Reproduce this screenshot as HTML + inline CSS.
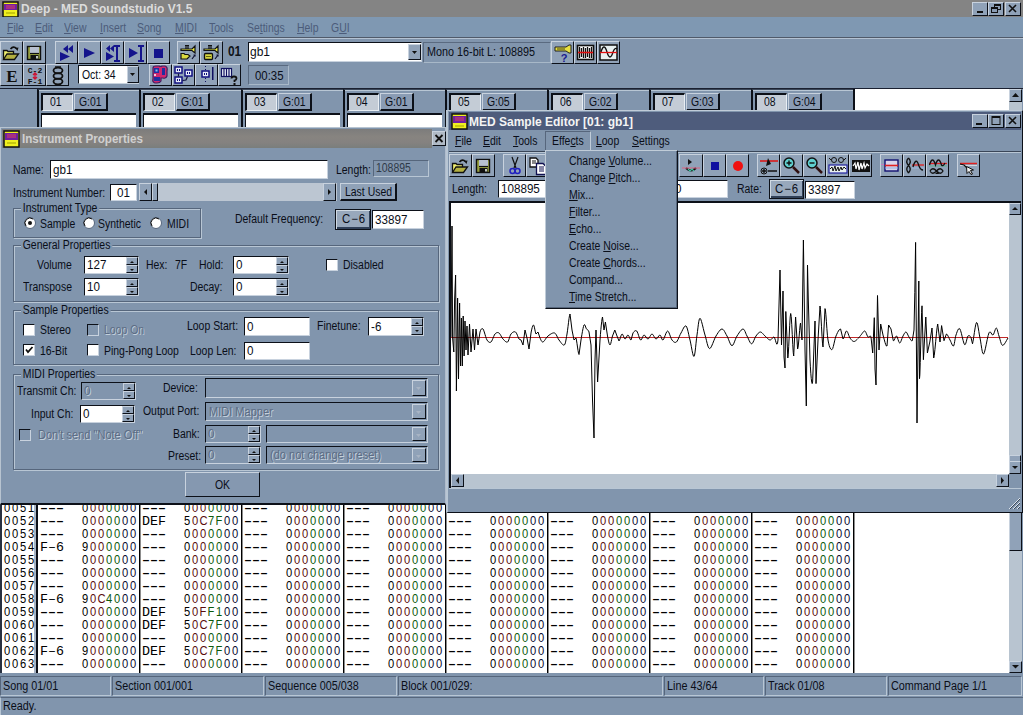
<!DOCTYPE html><html><head><meta charset="utf-8"><style>
html,body{margin:0;padding:0;}
body{width:1023px;height:715px;overflow:hidden;position:relative;background:#8195ad;font-family:"Liberation Sans",sans-serif;font-size:11px;color:#0a0e18;}
div{position:absolute;box-sizing:border-box;}
.t{white-space:nowrap;line-height:13px;font-size:12px;transform-origin:0 0;}
.h{font-family:"Liberation Sans",sans-serif;font-size:13px;line-height:13px;white-space:pre;}
.h i{font-style:normal;display:inline-block;width:8px;text-align:center;transform:scaleX(0.86);}
.k{color:#000}.r{color:#5a0c0c}.g{color:#0c5a0c}.b{color:#0a0a30}
.m{font-family:"Liberation Mono",monospace;font-size:13.33px;line-height:13px;white-space:pre;}
u{text-decoration:underline;text-underline-offset:1px;}
</style></head><body>

<div style="left:0px;top:0px;width:1023px;height:17px;background:#848484;"></div>
<div class="t" style="left:21px;top:3px;font-weight:bold;font-size:12px;color:#dcdcdc;">Deep - MED Soundstudio V1.5</div>
<svg style="position:absolute;left:2px;top:1px" width="18" height="17"><rect x="1" y="1" width="15" height="15" fill="#f0f020" stroke="#101010" stroke-width="1.5"/><rect x="2" y="3" width="13" height="6" fill="#7020a0"/><path d="M4 5 L13 5 M4 7 L13 7" stroke="#e04060"/><path d="M4 12 L13 12" stroke="#a0a000"/></svg>
<div style="left:972px;top:2px;width:16px;height:14px;background:#90a2b8;border-top:1px solid #c8d2de;border-left:1px solid #c8d2de;border-right:1px solid #0c1018;border-bottom:1px solid #0c1018;box-sizing:border-box;"><svg width="14" height="12" style="position:absolute;left:0;top:0"><rect x="4" y="8" width="6" height="2" fill="#101010"/></svg></div>
<div style="left:988px;top:2px;width:16px;height:14px;background:#90a2b8;border-top:1px solid #c8d2de;border-left:1px solid #c8d2de;border-right:1px solid #0c1018;border-bottom:1px solid #0c1018;box-sizing:border-box;"><svg width="14" height="12" style="position:absolute;left:0;top:0"><rect x="5.5" y="1.5" width="6" height="5" fill="none" stroke="#101010"/><rect x="5" y="1" width="7" height="2" fill="#101010"/><rect x="2.5" y="4.5" width="6" height="5" fill="#8a9cb4" stroke="#101010"/><rect x="2" y="4" width="7" height="2" fill="#101010"/></svg></div>
<div style="left:1005px;top:2px;width:16px;height:14px;background:#90a2b8;border-top:1px solid #c8d2de;border-left:1px solid #c8d2de;border-right:1px solid #0c1018;border-bottom:1px solid #0c1018;box-sizing:border-box;"><svg width="14" height="12" style="position:absolute;left:0;top:0"><path d="M3 2 L10 9 M10 2 L3 9" stroke="#101010" stroke-width="1.6"/></svg></div>
<div style="left:0px;top:17px;width:1023px;height:21px;background:#7f98b2;"></div>
<div class="t" style="left:7px;top:22px;transform:scaleX(0.87);color:#4c5c7a;font-size:12px;"><u>F</u>ile</div>
<div class="t" style="left:35px;top:22px;transform:scaleX(0.87);color:#4c5c7a;font-size:12px;"><u>E</u>dit</div>
<div class="t" style="left:64px;top:22px;transform:scaleX(0.87);color:#4c5c7a;font-size:12px;"><u>V</u>iew</div>
<div class="t" style="left:100px;top:22px;transform:scaleX(0.87);color:#4c5c7a;font-size:12px;"><u>I</u>nsert</div>
<div class="t" style="left:137px;top:22px;transform:scaleX(0.87);color:#4c5c7a;font-size:12px;"><u>S</u>ong</div>
<div class="t" style="left:175px;top:22px;transform:scaleX(0.87);color:#4c5c7a;font-size:12px;"><u>M</u>IDI</div>
<div class="t" style="left:209px;top:22px;transform:scaleX(0.87);color:#4c5c7a;font-size:12px;"><u>T</u>ools</div>
<div class="t" style="left:247px;top:22px;transform:scaleX(0.87);color:#4c5c7a;font-size:12px;">Se<u>t</u>tings</div>
<div class="t" style="left:297px;top:22px;transform:scaleX(0.87);color:#4c5c7a;font-size:12px;"><u>H</u>elp</div>
<div class="t" style="left:331px;top:22px;transform:scaleX(0.87);color:#4c5c7a;font-size:12px;">G<u>U</u>I</div>
<div style="left:0px;top:37px;width:1023px;height:1px;background:#505a6a;"></div>
<div style="left:0px;top:38px;width:1023px;height:1px;background:#b4c2d2;"></div>
<div style="left:0px;top:88px;width:1023px;height:1px;background:#1a2030;"></div>
<div style="left:0px;top:41px;width:23px;height:23px;background:#90a2b8;border-top:1px solid #c8d2de;border-left:1px solid #c8d2de;border-right:1px solid #0c1018;border-bottom:1px solid #0c1018;box-sizing:border-box;"><svg width="21" height="21" style="position:absolute;left:0;top:0" viewBox="0 0 21 21"><path d="M2.5 17.5 L2.5 8.5 L6 8.5 L7 9.5 L12.5 9.5 L12.5 12" fill="#f0f070" stroke="#101010" stroke-width="1.3"/><path d="M2.5 17.5 L6 12 L17.5 12 L13.5 17.5Z" fill="#b4b040" stroke="#101010" stroke-width="1.3"/><path d="M9.5 7 Q12.5 3.5 15.5 6.5" stroke="#101010" stroke-width="1.6" fill="none"/><path d="M14 6 L17.5 5.5 L16.5 9Z" fill="#101010"/></svg></div>
<div style="left:23px;top:41px;width:23px;height:23px;background:#90a2b8;border-top:1px solid #c8d2de;border-left:1px solid #c8d2de;border-right:1px solid #0c1018;border-bottom:1px solid #0c1018;box-sizing:border-box;"><svg width="21" height="21" style="position:absolute;left:0;top:0" viewBox="0 0 21 21"><rect x="3.5" y="4.5" width="13" height="13" fill="#98a040" stroke="#101010" stroke-width="1.4"/><rect x="6" y="5" width="9" height="6" fill="#b8c0d0"/><path d="M6 11.5 L15 11.5" stroke="#101010" stroke-width="1.2"/><rect x="6.5" y="13" width="8" height="4.5" fill="#101010"/><rect x="12" y="14" width="2" height="2.5" fill="#c0c8c0"/></svg></div>
<div style="left:55px;top:41px;width:23px;height:23px;background:#90a2b8;border-top:1px solid #c8d2de;border-left:1px solid #c8d2de;border-right:1px solid #0c1018;border-bottom:1px solid #0c1018;box-sizing:border-box;"><svg width="21" height="21" style="position:absolute;left:0;top:0" viewBox="0 0 21 21"><path d="M12 3 L12 11 L7 7Z M17 3 L17 11 L12 7Z" fill="#14148c"/><path d="M4 10 L4 19 L14 14.5Z" fill="#14148c"/></svg></div>
<div style="left:78px;top:41px;width:23px;height:23px;background:#90a2b8;border-top:1px solid #c8d2de;border-left:1px solid #c8d2de;border-right:1px solid #0c1018;border-bottom:1px solid #0c1018;box-sizing:border-box;"><svg width="21" height="21" style="position:absolute;left:0;top:0" viewBox="0 0 21 21"><path d="M5 6 L5 16 L16 11Z" fill="#14148c"/></svg></div>
<div style="left:101px;top:41px;width:23px;height:23px;background:#90a2b8;border-top:1px solid #c8d2de;border-left:1px solid #c8d2de;border-right:1px solid #0c1018;border-bottom:1px solid #0c1018;box-sizing:border-box;"><svg width="21" height="21" style="position:absolute;left:0;top:0" viewBox="0 0 21 21"><path d="M8 3 L8 10 L4 6.5Z M12 3 L12 10 L8 6.5Z" fill="#14148c"/><path d="M4 10 L4 19 L12 14.5Z" fill="#14148c"/><rect x="14" y="4" width="2" height="15" fill="#14148c"/><rect x="12" y="3" width="6" height="2" fill="#14148c"/><rect x="12" y="18" width="6" height="2" fill="#14148c"/></svg></div>
<div style="left:124px;top:41px;width:23px;height:23px;background:#90a2b8;border-top:1px solid #c8d2de;border-left:1px solid #c8d2de;border-right:1px solid #0c1018;border-bottom:1px solid #0c1018;box-sizing:border-box;"><svg width="21" height="21" style="position:absolute;left:0;top:0" viewBox="0 0 21 21"><path d="M4 6 L4 16 L13 11Z" fill="#14148c"/><rect x="15" y="4" width="2" height="15" fill="#14148c"/><rect x="13" y="3" width="6" height="2" fill="#14148c"/><rect x="13" y="18" width="6" height="2" fill="#14148c"/></svg></div>
<div style="left:147px;top:41px;width:23px;height:23px;background:#90a2b8;border-top:1px solid #c8d2de;border-left:1px solid #c8d2de;border-right:1px solid #0c1018;border-bottom:1px solid #0c1018;box-sizing:border-box;"><svg width="21" height="21" style="position:absolute;left:0;top:0" viewBox="0 0 21 21"><rect x="6" y="7" width="9" height="9" fill="#14148c"/></svg></div>
<div style="left:177px;top:41px;width:23px;height:23px;background:#90a2b8;border-top:1px solid #c8d2de;border-left:1px solid #c8d2de;border-right:1px solid #0c1018;border-bottom:1px solid #0c1018;box-sizing:border-box;"><svg width="21" height="21" style="position:absolute;left:0;top:0" viewBox="0 0 21 21"><path d="M3 7 L14 7 L17 4 L17 11 L14 8.5 L3 8.5Z" fill="#f0f040" stroke="#101010" stroke-width="1.2"/><path d="M7 3.5 L11 3.5 M8 4 L8 7 M10 4 L10 7" stroke="#101010" stroke-width="1.2"/><path d="M3 17 L3 11.5 L6 11.5 L7 12.5 L10 12.5 L12 14 L9 17Z" fill="#d8d840" stroke="#101010" stroke-width="1.2"/><path d="M14 17 L17 13 M15.5 13 L17 13 L17 14.5" stroke="#101030" stroke-width="1.2" fill="none"/></svg></div>
<div style="left:200px;top:41px;width:23px;height:23px;background:#90a2b8;border-top:1px solid #c8d2de;border-left:1px solid #c8d2de;border-right:1px solid #0c1018;border-bottom:1px solid #0c1018;box-sizing:border-box;"><svg width="21" height="21" style="position:absolute;left:0;top:0" viewBox="0 0 21 21"><path d="M3 7 L14 7 L17 4 L17 11 L14 8.5 L3 8.5Z" fill="#f0f040" stroke="#101010" stroke-width="1.2"/><path d="M7 3.5 L11 3.5 M8 4 L8 7 M10 4 L10 7" stroke="#101010" stroke-width="1.2"/><rect x="3.5" y="11.5" width="8" height="6" rx="1" fill="#d8d840" stroke="#101010" stroke-width="1.3"/><path d="M5 14.5 L10 14.5" stroke="#606010"/><path d="M14 17 L17 13 M15.5 13 L17 13 L17 14.5" stroke="#101030" stroke-width="1.2" fill="none"/></svg></div>
<div class="t" style="left:228px;top:45px;transform:scaleX(0.85);font-weight:bold;font-size:14px;color:#101418;">01</div>
<div style="left:248px;top:42px;width:174px;height:20px;background:#fff;border-top:1px solid #0c1018;border-left:1px solid #0c1018;border-right:1px solid #c8d2de;border-bottom:1px solid #c8d2de;box-sizing:border-box;"></div>
<div class="t" style="left:250px;top:46px;font-size:12px;">gb1</div>
<div style="left:408px;top:44px;width:13px;height:16px;background:#90a2b8;border-top:1px solid #c8d2de;border-left:1px solid #c8d2de;border-right:1px solid #0c1018;border-bottom:1px solid #0c1018;box-sizing:border-box;"><svg width="11" height="14" style="position:absolute;left:0;top:0"><path d="M3 6 L8 6 L5.5 9Z" fill="#101010"/></svg></div>
<div style="left:423px;top:42px;width:128px;height:21px;border-top:1px solid #5a6a80;border-left:1px solid #5a6a80;border-right:1px solid #a8b8c8;border-bottom:1px solid #a8b8c8;background:#8195ad;"></div>
<div class="t" style="left:427px;top:46px;transform:scaleX(0.9);font-size:12px;">Mono 16-bit L: 108895</div>
<div style="left:551px;top:41px;width:23px;height:23px;background:#90a2b8;border-top:1px solid #c8d2de;border-left:1px solid #c8d2de;border-right:1px solid #0c1018;border-bottom:1px solid #0c1018;box-sizing:border-box;"><svg width="21" height="21" style="position:absolute;left:0;top:0" viewBox="0 0 21 21"><path d="M3 5 L14 5 L17 3 L19 3 L19 11 L17 11 L14 9 L3 9Z" fill="#e8e040" stroke="#202020"/><path d="M5 7 L13 7" stroke="#404010"/><text x="12" y="20" font-family="Liberation Sans" font-weight="bold" font-size="11" text-anchor="middle" fill="#1a1a90">?</text></svg></div>
<div style="left:574px;top:41px;width:23px;height:23px;background:#90a2b8;border-top:1px solid #c8d2de;border-left:1px solid #c8d2de;border-right:1px solid #0c1018;border-bottom:1px solid #0c1018;box-sizing:border-box;"><svg width="21" height="21" style="position:absolute;left:0;top:0" viewBox="0 0 21 21"><rect x="2.5" y="3.5" width="16" height="14" fill="#fff" stroke="#101010" stroke-width="1.6"/><path d="M4.5 5 L4.5 16 M6.5 6 L6.5 15 M8.5 5 L8.5 16 M10.5 6 L10.5 16 M12.5 5 L12.5 15 M14.5 6 L14.5 16 M16.5 5 L16.5 16" stroke="#101010" stroke-width="1.3"/><path d="M3 10.5 L18 10.5" stroke="#e01010" stroke-width="1.6"/></svg></div>
<div style="left:597px;top:41px;width:23px;height:23px;background:#90a2b8;border-top:1px solid #c8d2de;border-left:1px solid #c8d2de;border-right:1px solid #0c1018;border-bottom:1px solid #0c1018;box-sizing:border-box;"><svg width="21" height="21" style="position:absolute;left:0;top:0" viewBox="0 0 21 21"><rect x="2" y="3" width="17" height="15" fill="#e8f0f0" stroke="#101010" stroke-width="1.5"/><path d="M3 10 Q6 0 9 10 Q12 20 15 10 Q17 5 19 7" stroke="#101010" stroke-width="1.3" fill="none"/><path d="M2 10.5 L19 10.5" stroke="#e01010" stroke-width="1.3"/></svg></div>
<div style="left:0px;top:64px;width:23px;height:22px;background:#90a2b8;border-top:1px solid #c8d2de;border-left:1px solid #c8d2de;border-right:1px solid #0c1018;border-bottom:1px solid #0c1018;box-sizing:border-box;"><svg width="21" height="20" style="position:absolute;left:0;top:0" viewBox="0 0 21 20"><text x="11" y="17" font-family="Liberation Serif" font-weight="bold" font-size="17" text-anchor="middle" fill="#101010">E</text></svg></div>
<div style="left:23px;top:64px;width:23px;height:22px;background:#90a2b8;border-top:1px solid #c8d2de;border-left:1px solid #c8d2de;border-right:1px solid #0c1018;border-bottom:1px solid #0c1018;box-sizing:border-box;"><svg width="21" height="20" style="position:absolute;left:0;top:0" viewBox="0 0 21 20"><text x="11" y="8" font-family="Liberation Mono" font-weight="bold" font-size="8" text-anchor="middle" fill="#101010">C-2</text><text x="11" y="19" font-family="Liberation Mono" font-weight="bold" font-size="8" text-anchor="middle" fill="#101010">F-1</text><path d="M11 8 L11 14 M9 10 L11 8 L13 10 M9 12 L11 14 L13 12" stroke="#d01030" stroke-width="1.3" fill="none"/></svg></div>
<div style="left:46px;top:64px;width:23px;height:22px;background:#90a2b8;border-top:1px solid #c8d2de;border-left:1px solid #c8d2de;border-right:1px solid #0c1018;border-bottom:1px solid #0c1018;box-sizing:border-box;"><svg width="21" height="20" style="position:absolute;left:0;top:0" viewBox="0 0 21 20"><ellipse cx="11" cy="5.5" rx="4.5" ry="2.8" fill="none" stroke="#101010" stroke-width="1.8"/><ellipse cx="11" cy="11" rx="4.5" ry="2.8" fill="none" stroke="#101010" stroke-width="1.8"/><ellipse cx="11" cy="16.5" rx="4.5" ry="2.8" fill="none" stroke="#101010" stroke-width="1.8"/><path d="M8 2 L14 2 M8 20 L14 20" stroke="#101010" stroke-width="1.5"/></svg></div>
<div style="left:78px;top:65px;width:61px;height:19px;background:#fff;border-top:1px solid #0c1018;border-left:1px solid #0c1018;border-right:1px solid #c8d2de;border-bottom:1px solid #c8d2de;box-sizing:border-box;"></div>
<div class="t" style="left:82px;top:69px;transform:scaleX(0.87);font-size:12px;">Oct: 34</div>
<div style="left:127px;top:66px;width:12px;height:17px;background:#90a2b8;border-top:1px solid #c8d2de;border-left:1px solid #c8d2de;border-right:1px solid #0c1018;border-bottom:1px solid #0c1018;box-sizing:border-box;"><svg width="10" height="15" style="position:absolute;left:0;top:0"><path d="M2 6 L7 6 L4.5 9Z" fill="#101010"/></svg></div>
<div style="left:149px;top:64px;width:23px;height:22px;background:#90a2b8;border-top:1px solid #c8d2de;border-left:1px solid #c8d2de;border-right:1px solid #0c1018;border-bottom:1px solid #0c1018;box-sizing:border-box;"><svg width="21" height="20" style="position:absolute;left:0;top:0" viewBox="0 0 21 20"><path d="M3 3 Q3 1 6 1 L9 1 Q11 2 12 1 L15 1 Q18 2 17 6 L17 11 Q16 14 13 13 L11 13 L11 16 Q10 18 7 18 L5 18 Q2 17 3 14 Z" fill="#d02870" stroke="#402060" stroke-width="1.2"/><rect x="4" y="3" width="5" height="5" fill="#2030a0"/><rect x="5.5" y="4.5" width="2" height="2" fill="#80c0f0"/><rect x="4" y="12" width="6" height="4" fill="#2030a0"/><rect x="12" y="3" width="3" height="7" fill="#2030a0"/><circle cx="5" cy="10" r="1" fill="#fff"/></svg></div>
<div style="left:172px;top:64px;width:23px;height:22px;background:#90a2b8;border-top:1px solid #c8d2de;border-left:1px solid #c8d2de;border-right:1px solid #0c1018;border-bottom:1px solid #0c1018;box-sizing:border-box;"><svg width="21" height="20" style="position:absolute;left:0;top:0" viewBox="0 0 21 20"><rect x="2" y="2" width="7" height="6" fill="#e8ecf8" stroke="#101080" stroke-width="1.5"/><path d="M4.5 4 L4.5 6 M6.5 4 L6.5 6" stroke="#101080"/><rect x="12" y="5" width="7" height="6" fill="#e8ecf8" stroke="#101080" stroke-width="1.5"/><path d="M14.5 7 L14.5 9 M16.5 7 L16.5 9" stroke="#101080"/><rect x="2" y="12" width="7" height="6" fill="#e8ecf8" stroke="#101080" stroke-width="1.5"/><path d="M4.5 14 L4.5 16 M6.5 14 L6.5 16" stroke="#101080"/><path d="M5.5 8.5 L5.5 11.5 M9.5 15.5 L13 15 L14.5 11.5" stroke="#101040" stroke-width="1.2" fill="none"/></svg></div>
<div style="left:195px;top:64px;width:23px;height:22px;background:#90a2b8;border-top:1px solid #c8d2de;border-left:1px solid #c8d2de;border-right:1px solid #0c1018;border-bottom:1px solid #0c1018;box-sizing:border-box;"><svg width="21" height="20" style="position:absolute;left:0;top:0" viewBox="0 0 21 20"><path d="M9.5 1 L9.5 17" stroke="#101060" stroke-dasharray="1 2"/><rect x="6" y="6" width="7" height="6" fill="#e8ecf8" stroke="#101080" stroke-width="1.5"/><path d="M8.5 8 L8.5 10 M10.5 8 L10.5 10" stroke="#101080"/><rect x="16" y="2" width="1.5" height="13" fill="#101060"/></svg></div>
<div style="left:218px;top:64px;width:23px;height:22px;background:#90a2b8;border-top:1px solid #c8d2de;border-left:1px solid #c8d2de;border-right:1px solid #0c1018;border-bottom:1px solid #0c1018;box-sizing:border-box;"><svg width="21" height="20" style="position:absolute;left:0;top:0" viewBox="0 0 21 20"><rect x="2.5" y="3.5" width="10" height="8" fill="#f0f4fc" stroke="#101060" stroke-width="1.2"/><path d="M5 3.5 L5 11.5 M7.5 3.5 L7.5 11.5 M10 3.5 L10 11.5" stroke="#101060" stroke-width="1.2"/><path d="M12.5 13.5 Q12.5 11.5 15 11.5 Q17.5 11.5 17.5 13.5 Q17.5 15 15.5 15.5 L15.5 17" stroke="#101010" stroke-width="1.8" fill="none"/><rect x="14.5" y="18" width="2" height="2" fill="#101010"/></svg></div>
<div style="left:248px;top:65px;width:41px;height:20px;border-top:1px solid #5a6a80;border-left:1px solid #5a6a80;border-right:1px solid #a8b8c8;border-bottom:1px solid #a8b8c8;background:#8195ad;"></div>
<div class="t" style="left:255px;top:70px;transform:scaleX(0.95);font-size:12px;">00:35</div>
<div style="left:37px;top:89px;width:102px;height:40px;border-left:2px solid #0c1018;border-top:1px solid #3a4658;background:#8195ad;"></div>
<div style="left:39px;top:90px;width:100px;height:1px;background:#b8c6d4;"></div>
<div style="left:41px;top:93px;width:32px;height:18px;background:#c4ccd6;border-top:2px solid #0c1018;border-left:2px solid #0c1018;border-right:1px solid #e8eef4;border-bottom:1px solid #e8eef4;"></div>
<div class="t" style="left:50px;top:96px;transform:scaleX(0.87);font-size:12px;">01</div>
<div style="left:74px;top:93px;width:34px;height:18px;background:#8a9cb4;border-top:1px solid #c8d2de;border-left:1px solid #c8d2de;border-right:1px solid #0c1018;border-bottom:1px solid #0c1018;box-sizing:border-box;border-right:2px solid #0c1018;border-bottom:2px solid #0c1018;"></div>
<div class="t" style="left:79px;top:96px;transform:scaleX(0.87);font-size:12px;">G:01</div>
<div style="left:41px;top:113px;width:95px;height:16px;background:#fff;border-top:2px solid #0c1018;border-left:1px solid #0c1018;"></div>
<div style="left:139px;top:89px;width:102px;height:40px;border-left:2px solid #0c1018;border-top:1px solid #3a4658;background:#8195ad;"></div>
<div style="left:141px;top:90px;width:100px;height:1px;background:#b8c6d4;"></div>
<div style="left:143px;top:93px;width:32px;height:18px;background:#c4ccd6;border-top:2px solid #0c1018;border-left:2px solid #0c1018;border-right:1px solid #e8eef4;border-bottom:1px solid #e8eef4;"></div>
<div class="t" style="left:152px;top:96px;transform:scaleX(0.87);font-size:12px;">02</div>
<div style="left:176px;top:93px;width:34px;height:18px;background:#8a9cb4;border-top:1px solid #c8d2de;border-left:1px solid #c8d2de;border-right:1px solid #0c1018;border-bottom:1px solid #0c1018;box-sizing:border-box;border-right:2px solid #0c1018;border-bottom:2px solid #0c1018;"></div>
<div class="t" style="left:181px;top:96px;transform:scaleX(0.87);font-size:12px;">G:01</div>
<div style="left:143px;top:113px;width:95px;height:16px;background:#fff;border-top:2px solid #0c1018;border-left:1px solid #0c1018;"></div>
<div style="left:241px;top:89px;width:102px;height:40px;border-left:2px solid #0c1018;border-top:1px solid #3a4658;background:#8195ad;"></div>
<div style="left:243px;top:90px;width:100px;height:1px;background:#b8c6d4;"></div>
<div style="left:245px;top:93px;width:32px;height:18px;background:#c4ccd6;border-top:2px solid #0c1018;border-left:2px solid #0c1018;border-right:1px solid #e8eef4;border-bottom:1px solid #e8eef4;"></div>
<div class="t" style="left:254px;top:96px;transform:scaleX(0.87);font-size:12px;">03</div>
<div style="left:278px;top:93px;width:34px;height:18px;background:#8a9cb4;border-top:1px solid #c8d2de;border-left:1px solid #c8d2de;border-right:1px solid #0c1018;border-bottom:1px solid #0c1018;box-sizing:border-box;border-right:2px solid #0c1018;border-bottom:2px solid #0c1018;"></div>
<div class="t" style="left:283px;top:96px;transform:scaleX(0.87);font-size:12px;">G:01</div>
<div style="left:245px;top:113px;width:95px;height:16px;background:#fff;border-top:2px solid #0c1018;border-left:1px solid #0c1018;"></div>
<div style="left:343px;top:89px;width:102px;height:40px;border-left:2px solid #0c1018;border-top:1px solid #3a4658;background:#8195ad;"></div>
<div style="left:345px;top:90px;width:100px;height:1px;background:#b8c6d4;"></div>
<div style="left:347px;top:93px;width:32px;height:18px;background:#c4ccd6;border-top:2px solid #0c1018;border-left:2px solid #0c1018;border-right:1px solid #e8eef4;border-bottom:1px solid #e8eef4;"></div>
<div class="t" style="left:356px;top:96px;transform:scaleX(0.87);font-size:12px;">04</div>
<div style="left:380px;top:93px;width:34px;height:18px;background:#8a9cb4;border-top:1px solid #c8d2de;border-left:1px solid #c8d2de;border-right:1px solid #0c1018;border-bottom:1px solid #0c1018;box-sizing:border-box;border-right:2px solid #0c1018;border-bottom:2px solid #0c1018;"></div>
<div class="t" style="left:385px;top:96px;transform:scaleX(0.87);font-size:12px;">G:01</div>
<div style="left:347px;top:113px;width:95px;height:16px;background:#fff;border-top:2px solid #0c1018;border-left:1px solid #0c1018;"></div>
<div style="left:445px;top:89px;width:102px;height:40px;border-left:2px solid #0c1018;border-top:1px solid #3a4658;background:#8195ad;"></div>
<div style="left:447px;top:90px;width:100px;height:1px;background:#b8c6d4;"></div>
<div style="left:449px;top:93px;width:32px;height:18px;background:#c4ccd6;border-top:2px solid #0c1018;border-left:2px solid #0c1018;border-right:1px solid #e8eef4;border-bottom:1px solid #e8eef4;"></div>
<div class="t" style="left:458px;top:96px;transform:scaleX(0.87);font-size:12px;">05</div>
<div style="left:482px;top:93px;width:34px;height:18px;background:#8a9cb4;border-top:1px solid #c8d2de;border-left:1px solid #c8d2de;border-right:1px solid #0c1018;border-bottom:1px solid #0c1018;box-sizing:border-box;border-right:2px solid #0c1018;border-bottom:2px solid #0c1018;"></div>
<div class="t" style="left:487px;top:96px;transform:scaleX(0.87);font-size:12px;">G:05</div>
<div style="left:449px;top:113px;width:95px;height:16px;background:#fff;border-top:2px solid #0c1018;border-left:1px solid #0c1018;"></div>
<div style="left:547px;top:89px;width:102px;height:40px;border-left:2px solid #0c1018;border-top:1px solid #3a4658;background:#8195ad;"></div>
<div style="left:549px;top:90px;width:100px;height:1px;background:#b8c6d4;"></div>
<div style="left:551px;top:93px;width:32px;height:18px;background:#c4ccd6;border-top:2px solid #0c1018;border-left:2px solid #0c1018;border-right:1px solid #e8eef4;border-bottom:1px solid #e8eef4;"></div>
<div class="t" style="left:560px;top:96px;transform:scaleX(0.87);font-size:12px;">06</div>
<div style="left:584px;top:93px;width:34px;height:18px;background:#8a9cb4;border-top:1px solid #c8d2de;border-left:1px solid #c8d2de;border-right:1px solid #0c1018;border-bottom:1px solid #0c1018;box-sizing:border-box;border-right:2px solid #0c1018;border-bottom:2px solid #0c1018;"></div>
<div class="t" style="left:589px;top:96px;transform:scaleX(0.87);font-size:12px;">G:02</div>
<div style="left:551px;top:113px;width:95px;height:16px;background:#fff;border-top:2px solid #0c1018;border-left:1px solid #0c1018;"></div>
<div style="left:649px;top:89px;width:102px;height:40px;border-left:2px solid #0c1018;border-top:1px solid #3a4658;background:#8195ad;"></div>
<div style="left:651px;top:90px;width:100px;height:1px;background:#b8c6d4;"></div>
<div style="left:653px;top:93px;width:32px;height:18px;background:#c4ccd6;border-top:2px solid #0c1018;border-left:2px solid #0c1018;border-right:1px solid #e8eef4;border-bottom:1px solid #e8eef4;"></div>
<div class="t" style="left:662px;top:96px;transform:scaleX(0.87);font-size:12px;">07</div>
<div style="left:686px;top:93px;width:34px;height:18px;background:#8a9cb4;border-top:1px solid #c8d2de;border-left:1px solid #c8d2de;border-right:1px solid #0c1018;border-bottom:1px solid #0c1018;box-sizing:border-box;border-right:2px solid #0c1018;border-bottom:2px solid #0c1018;"></div>
<div class="t" style="left:691px;top:96px;transform:scaleX(0.87);font-size:12px;">G:03</div>
<div style="left:653px;top:113px;width:95px;height:16px;background:#fff;border-top:2px solid #0c1018;border-left:1px solid #0c1018;"></div>
<div style="left:751px;top:89px;width:102px;height:40px;border-left:2px solid #0c1018;border-top:1px solid #3a4658;background:#8195ad;"></div>
<div style="left:753px;top:90px;width:100px;height:1px;background:#b8c6d4;"></div>
<div style="left:755px;top:93px;width:32px;height:18px;background:#c4ccd6;border-top:2px solid #0c1018;border-left:2px solid #0c1018;border-right:1px solid #e8eef4;border-bottom:1px solid #e8eef4;"></div>
<div class="t" style="left:764px;top:96px;transform:scaleX(0.87);font-size:12px;">08</div>
<div style="left:788px;top:93px;width:34px;height:18px;background:#8a9cb4;border-top:1px solid #c8d2de;border-left:1px solid #c8d2de;border-right:1px solid #0c1018;border-bottom:1px solid #0c1018;box-sizing:border-box;border-right:2px solid #0c1018;border-bottom:2px solid #0c1018;"></div>
<div class="t" style="left:793px;top:96px;transform:scaleX(0.87);font-size:12px;">G:04</div>
<div style="left:755px;top:113px;width:95px;height:16px;background:#fff;border-top:2px solid #0c1018;border-left:1px solid #0c1018;"></div>
<div style="left:853px;top:89px;width:156px;height:22px;background:#fff;border-left:2px solid #0c1018;"></div>
<div style="left:1009px;top:89px;width:13px;height:13px;background:#90a2b8;border-top:1px solid #c8d2de;border-left:1px solid #c8d2de;border-right:1px solid #0c1018;border-bottom:1px solid #0c1018;box-sizing:border-box;"><svg width="11" height="11" style="position:absolute;left:0;top:0"><path d="M2 7 L9 7 L5.5 3Z" fill="#101010"/></svg></div>
<div style="left:1009px;top:102px;width:13px;height:26px;background:#b8c4d0;"></div>
<div style="left:0px;top:503px;width:1009px;height:170px;background:#fff;overflow:hidden;"></div>
<div style="left:34px;top:502px;width:2px;height:171px;background:#a8b4c4;"></div><div style="left:36px;top:502px;width:2px;height:171px;background:#0c1018;"></div><div style="left:139px;top:502px;width:1px;height:171px;background:#000;box-shadow:1px 0 0 rgba(0,0,0,0.45);"></div><div style="left:241px;top:502px;width:1px;height:171px;background:#000;box-shadow:1px 0 0 rgba(0,0,0,0.45);"></div><div style="left:343px;top:502px;width:1px;height:171px;background:#000;box-shadow:1px 0 0 rgba(0,0,0,0.45);"></div><div style="left:445px;top:502px;width:1px;height:171px;background:#000;box-shadow:1px 0 0 rgba(0,0,0,0.45);"></div><div style="left:547px;top:502px;width:1px;height:171px;background:#000;box-shadow:1px 0 0 rgba(0,0,0,0.45);"></div><div style="left:649px;top:502px;width:1px;height:171px;background:#000;box-shadow:1px 0 0 rgba(0,0,0,0.45);"></div><div style="left:751px;top:502px;width:1px;height:171px;background:#000;box-shadow:1px 0 0 rgba(0,0,0,0.45);"></div><div style="left:853px;top:502px;width:1px;height:171px;background:#000;box-shadow:1px 0 0 rgba(0,0,0,0.45);"></div><div class="h" style="left:3px;top:501px"><i class="k">0</i><i class="k">0</i><i class="k">5</i><i class="k">1</i></div><div class="m" style="left:40px;top:502px;color:#000;font-weight:bold">&#8211;&#8211;&#8211;</div><div class="h" style="left:81px;top:501px"><i class="k">0</i><i class="r">0</i><i class="r">0</i><i class="g">0</i><i class="g">0</i><i class="b">0</i><i class="b">0</i></div><div class="m" style="left:142px;top:502px;color:#000;font-weight:bold">&#8211;&#8211;&#8211;</div><div class="h" style="left:183px;top:501px"><i class="k">0</i><i class="r">0</i><i class="r">0</i><i class="g">0</i><i class="g">0</i><i class="b">0</i><i class="b">0</i></div><div class="m" style="left:244px;top:502px;color:#000;font-weight:bold">&#8211;&#8211;&#8211;</div><div class="h" style="left:285px;top:501px"><i class="k">0</i><i class="r">0</i><i class="r">0</i><i class="g">0</i><i class="g">0</i><i class="b">0</i><i class="b">0</i></div><div class="m" style="left:346px;top:502px;color:#000;font-weight:bold">&#8211;&#8211;&#8211;</div><div class="h" style="left:387px;top:501px"><i class="k">0</i><i class="r">0</i><i class="r">0</i><i class="g">0</i><i class="g">0</i><i class="b">0</i><i class="b">0</i></div><div class="m" style="left:448px;top:502px;color:#000;font-weight:bold">&#8211;&#8211;&#8211;</div><div class="h" style="left:489px;top:501px"><i class="k">0</i><i class="r">0</i><i class="r">0</i><i class="g">0</i><i class="g">0</i><i class="b">0</i><i class="b">0</i></div><div class="m" style="left:550px;top:502px;color:#000;font-weight:bold">&#8211;&#8211;&#8211;</div><div class="h" style="left:591px;top:501px"><i class="k">0</i><i class="r">0</i><i class="r">0</i><i class="g">0</i><i class="g">0</i><i class="b">0</i><i class="b">0</i></div><div class="m" style="left:652px;top:502px;color:#000;font-weight:bold">&#8211;&#8211;&#8211;</div><div class="h" style="left:693px;top:501px"><i class="k">0</i><i class="r">0</i><i class="r">0</i><i class="g">0</i><i class="g">0</i><i class="b">0</i><i class="b">0</i></div><div class="m" style="left:754px;top:502px;color:#000;font-weight:bold">&#8211;&#8211;&#8211;</div><div class="h" style="left:795px;top:501px"><i class="k">0</i><i class="r">0</i><i class="r">0</i><i class="g">0</i><i class="g">0</i><i class="b">0</i><i class="b">0</i></div><div class="h" style="left:3px;top:514px"><i class="k">0</i><i class="k">0</i><i class="k">5</i><i class="k">2</i></div><div class="m" style="left:40px;top:515px;color:#000;font-weight:bold">&#8211;&#8211;&#8211;</div><div class="h" style="left:81px;top:514px"><i class="k">0</i><i class="r">0</i><i class="r">0</i><i class="g">0</i><i class="g">0</i><i class="b">0</i><i class="b">0</i></div><div class="m" style="left:142px;top:515px;color:#000;">DEF</div><div class="h" style="left:183px;top:514px"><i class="k">5</i><i class="r">0</i><i class="r">C</i><i class="g">7</i><i class="g">F</i><i class="b">0</i><i class="b">0</i></div><div class="m" style="left:244px;top:515px;color:#000;font-weight:bold">&#8211;&#8211;&#8211;</div><div class="h" style="left:285px;top:514px"><i class="k">0</i><i class="r">0</i><i class="r">0</i><i class="g">0</i><i class="g">0</i><i class="b">0</i><i class="b">0</i></div><div class="m" style="left:346px;top:515px;color:#000;font-weight:bold">&#8211;&#8211;&#8211;</div><div class="h" style="left:387px;top:514px"><i class="k">0</i><i class="r">0</i><i class="r">0</i><i class="g">0</i><i class="g">0</i><i class="b">0</i><i class="b">0</i></div><div class="m" style="left:448px;top:515px;color:#000;font-weight:bold">&#8211;&#8211;&#8211;</div><div class="h" style="left:489px;top:514px"><i class="k">0</i><i class="r">0</i><i class="r">0</i><i class="g">0</i><i class="g">0</i><i class="b">0</i><i class="b">0</i></div><div class="m" style="left:550px;top:515px;color:#000;font-weight:bold">&#8211;&#8211;&#8211;</div><div class="h" style="left:591px;top:514px"><i class="k">0</i><i class="r">0</i><i class="r">0</i><i class="g">0</i><i class="g">0</i><i class="b">0</i><i class="b">0</i></div><div class="m" style="left:652px;top:515px;color:#000;font-weight:bold">&#8211;&#8211;&#8211;</div><div class="h" style="left:693px;top:514px"><i class="k">0</i><i class="r">0</i><i class="r">0</i><i class="g">0</i><i class="g">0</i><i class="b">0</i><i class="b">0</i></div><div class="m" style="left:754px;top:515px;color:#000;font-weight:bold">&#8211;&#8211;&#8211;</div><div class="h" style="left:795px;top:514px"><i class="k">0</i><i class="r">0</i><i class="r">0</i><i class="g">0</i><i class="g">0</i><i class="b">0</i><i class="b">0</i></div><div class="h" style="left:3px;top:527px"><i class="k">0</i><i class="k">0</i><i class="k">5</i><i class="k">3</i></div><div class="m" style="left:40px;top:528px;color:#000;font-weight:bold">&#8211;&#8211;&#8211;</div><div class="h" style="left:81px;top:527px"><i class="k">0</i><i class="r">0</i><i class="r">0</i><i class="g">0</i><i class="g">0</i><i class="b">0</i><i class="b">0</i></div><div class="m" style="left:142px;top:528px;color:#000;font-weight:bold">&#8211;&#8211;&#8211;</div><div class="h" style="left:183px;top:527px"><i class="k">0</i><i class="r">0</i><i class="r">0</i><i class="g">0</i><i class="g">0</i><i class="b">0</i><i class="b">0</i></div><div class="m" style="left:244px;top:528px;color:#000;font-weight:bold">&#8211;&#8211;&#8211;</div><div class="h" style="left:285px;top:527px"><i class="k">0</i><i class="r">0</i><i class="r">0</i><i class="g">0</i><i class="g">0</i><i class="b">0</i><i class="b">0</i></div><div class="m" style="left:346px;top:528px;color:#000;font-weight:bold">&#8211;&#8211;&#8211;</div><div class="h" style="left:387px;top:527px"><i class="k">0</i><i class="r">0</i><i class="r">0</i><i class="g">0</i><i class="g">0</i><i class="b">0</i><i class="b">0</i></div><div class="m" style="left:448px;top:528px;color:#000;font-weight:bold">&#8211;&#8211;&#8211;</div><div class="h" style="left:489px;top:527px"><i class="k">0</i><i class="r">0</i><i class="r">0</i><i class="g">0</i><i class="g">0</i><i class="b">0</i><i class="b">0</i></div><div class="m" style="left:550px;top:528px;color:#000;font-weight:bold">&#8211;&#8211;&#8211;</div><div class="h" style="left:591px;top:527px"><i class="k">0</i><i class="r">0</i><i class="r">0</i><i class="g">0</i><i class="g">0</i><i class="b">0</i><i class="b">0</i></div><div class="m" style="left:652px;top:528px;color:#000;font-weight:bold">&#8211;&#8211;&#8211;</div><div class="h" style="left:693px;top:527px"><i class="k">0</i><i class="r">0</i><i class="r">0</i><i class="g">0</i><i class="g">0</i><i class="b">0</i><i class="b">0</i></div><div class="m" style="left:754px;top:528px;color:#000;font-weight:bold">&#8211;&#8211;&#8211;</div><div class="h" style="left:795px;top:527px"><i class="k">0</i><i class="r">0</i><i class="r">0</i><i class="g">0</i><i class="g">0</i><i class="b">0</i><i class="b">0</i></div><div class="h" style="left:3px;top:540px"><i class="k">0</i><i class="k">0</i><i class="k">5</i><i class="k">4</i></div><div class="m" style="left:40px;top:541px;color:#000;">F&#8211;6</div><div class="h" style="left:81px;top:540px"><i class="k">9</i><i class="r">0</i><i class="r">0</i><i class="g">0</i><i class="g">0</i><i class="b">0</i><i class="b">0</i></div><div class="m" style="left:142px;top:541px;color:#000;font-weight:bold">&#8211;&#8211;&#8211;</div><div class="h" style="left:183px;top:540px"><i class="k">0</i><i class="r">0</i><i class="r">0</i><i class="g">0</i><i class="g">0</i><i class="b">0</i><i class="b">0</i></div><div class="m" style="left:244px;top:541px;color:#000;font-weight:bold">&#8211;&#8211;&#8211;</div><div class="h" style="left:285px;top:540px"><i class="k">0</i><i class="r">0</i><i class="r">0</i><i class="g">0</i><i class="g">0</i><i class="b">0</i><i class="b">0</i></div><div class="m" style="left:346px;top:541px;color:#000;font-weight:bold">&#8211;&#8211;&#8211;</div><div class="h" style="left:387px;top:540px"><i class="k">0</i><i class="r">0</i><i class="r">0</i><i class="g">0</i><i class="g">0</i><i class="b">0</i><i class="b">0</i></div><div class="m" style="left:448px;top:541px;color:#000;font-weight:bold">&#8211;&#8211;&#8211;</div><div class="h" style="left:489px;top:540px"><i class="k">0</i><i class="r">0</i><i class="r">0</i><i class="g">0</i><i class="g">0</i><i class="b">0</i><i class="b">0</i></div><div class="m" style="left:550px;top:541px;color:#000;font-weight:bold">&#8211;&#8211;&#8211;</div><div class="h" style="left:591px;top:540px"><i class="k">0</i><i class="r">0</i><i class="r">0</i><i class="g">0</i><i class="g">0</i><i class="b">0</i><i class="b">0</i></div><div class="m" style="left:652px;top:541px;color:#000;font-weight:bold">&#8211;&#8211;&#8211;</div><div class="h" style="left:693px;top:540px"><i class="k">0</i><i class="r">0</i><i class="r">0</i><i class="g">0</i><i class="g">0</i><i class="b">0</i><i class="b">0</i></div><div class="m" style="left:754px;top:541px;color:#000;font-weight:bold">&#8211;&#8211;&#8211;</div><div class="h" style="left:795px;top:540px"><i class="k">0</i><i class="r">0</i><i class="r">0</i><i class="g">0</i><i class="g">0</i><i class="b">0</i><i class="b">0</i></div><div class="h" style="left:3px;top:553px"><i class="k">0</i><i class="k">0</i><i class="k">5</i><i class="k">5</i></div><div class="m" style="left:40px;top:554px;color:#000;font-weight:bold">&#8211;&#8211;&#8211;</div><div class="h" style="left:81px;top:553px"><i class="k">0</i><i class="r">0</i><i class="r">0</i><i class="g">0</i><i class="g">0</i><i class="b">0</i><i class="b">0</i></div><div class="m" style="left:142px;top:554px;color:#000;font-weight:bold">&#8211;&#8211;&#8211;</div><div class="h" style="left:183px;top:553px"><i class="k">0</i><i class="r">0</i><i class="r">0</i><i class="g">0</i><i class="g">0</i><i class="b">0</i><i class="b">0</i></div><div class="m" style="left:244px;top:554px;color:#000;font-weight:bold">&#8211;&#8211;&#8211;</div><div class="h" style="left:285px;top:553px"><i class="k">0</i><i class="r">0</i><i class="r">0</i><i class="g">0</i><i class="g">0</i><i class="b">0</i><i class="b">0</i></div><div class="m" style="left:346px;top:554px;color:#000;font-weight:bold">&#8211;&#8211;&#8211;</div><div class="h" style="left:387px;top:553px"><i class="k">0</i><i class="r">0</i><i class="r">0</i><i class="g">0</i><i class="g">0</i><i class="b">0</i><i class="b">0</i></div><div class="m" style="left:448px;top:554px;color:#000;font-weight:bold">&#8211;&#8211;&#8211;</div><div class="h" style="left:489px;top:553px"><i class="k">0</i><i class="r">0</i><i class="r">0</i><i class="g">0</i><i class="g">0</i><i class="b">0</i><i class="b">0</i></div><div class="m" style="left:550px;top:554px;color:#000;font-weight:bold">&#8211;&#8211;&#8211;</div><div class="h" style="left:591px;top:553px"><i class="k">0</i><i class="r">0</i><i class="r">0</i><i class="g">0</i><i class="g">0</i><i class="b">0</i><i class="b">0</i></div><div class="m" style="left:652px;top:554px;color:#000;font-weight:bold">&#8211;&#8211;&#8211;</div><div class="h" style="left:693px;top:553px"><i class="k">0</i><i class="r">0</i><i class="r">0</i><i class="g">0</i><i class="g">0</i><i class="b">0</i><i class="b">0</i></div><div class="m" style="left:754px;top:554px;color:#000;font-weight:bold">&#8211;&#8211;&#8211;</div><div class="h" style="left:795px;top:553px"><i class="k">0</i><i class="r">0</i><i class="r">0</i><i class="g">0</i><i class="g">0</i><i class="b">0</i><i class="b">0</i></div><div class="h" style="left:3px;top:566px"><i class="k">0</i><i class="k">0</i><i class="k">5</i><i class="k">6</i></div><div class="m" style="left:40px;top:567px;color:#000;font-weight:bold">&#8211;&#8211;&#8211;</div><div class="h" style="left:81px;top:566px"><i class="k">0</i><i class="r">0</i><i class="r">0</i><i class="g">0</i><i class="g">0</i><i class="b">0</i><i class="b">0</i></div><div class="m" style="left:142px;top:567px;color:#000;font-weight:bold">&#8211;&#8211;&#8211;</div><div class="h" style="left:183px;top:566px"><i class="k">0</i><i class="r">0</i><i class="r">0</i><i class="g">0</i><i class="g">0</i><i class="b">0</i><i class="b">0</i></div><div class="m" style="left:244px;top:567px;color:#000;font-weight:bold">&#8211;&#8211;&#8211;</div><div class="h" style="left:285px;top:566px"><i class="k">0</i><i class="r">0</i><i class="r">0</i><i class="g">0</i><i class="g">0</i><i class="b">0</i><i class="b">0</i></div><div class="m" style="left:346px;top:567px;color:#000;font-weight:bold">&#8211;&#8211;&#8211;</div><div class="h" style="left:387px;top:566px"><i class="k">0</i><i class="r">0</i><i class="r">0</i><i class="g">0</i><i class="g">0</i><i class="b">0</i><i class="b">0</i></div><div class="m" style="left:448px;top:567px;color:#000;font-weight:bold">&#8211;&#8211;&#8211;</div><div class="h" style="left:489px;top:566px"><i class="k">0</i><i class="r">0</i><i class="r">0</i><i class="g">0</i><i class="g">0</i><i class="b">0</i><i class="b">0</i></div><div class="m" style="left:550px;top:567px;color:#000;font-weight:bold">&#8211;&#8211;&#8211;</div><div class="h" style="left:591px;top:566px"><i class="k">0</i><i class="r">0</i><i class="r">0</i><i class="g">0</i><i class="g">0</i><i class="b">0</i><i class="b">0</i></div><div class="m" style="left:652px;top:567px;color:#000;font-weight:bold">&#8211;&#8211;&#8211;</div><div class="h" style="left:693px;top:566px"><i class="k">0</i><i class="r">0</i><i class="r">0</i><i class="g">0</i><i class="g">0</i><i class="b">0</i><i class="b">0</i></div><div class="m" style="left:754px;top:567px;color:#000;font-weight:bold">&#8211;&#8211;&#8211;</div><div class="h" style="left:795px;top:566px"><i class="k">0</i><i class="r">0</i><i class="r">0</i><i class="g">0</i><i class="g">0</i><i class="b">0</i><i class="b">0</i></div><div class="h" style="left:3px;top:579px"><i class="k">0</i><i class="k">0</i><i class="k">5</i><i class="k">7</i></div><div class="m" style="left:40px;top:580px;color:#000;font-weight:bold">&#8211;&#8211;&#8211;</div><div class="h" style="left:81px;top:579px"><i class="k">0</i><i class="r">0</i><i class="r">0</i><i class="g">0</i><i class="g">0</i><i class="b">0</i><i class="b">0</i></div><div class="m" style="left:142px;top:580px;color:#000;font-weight:bold">&#8211;&#8211;&#8211;</div><div class="h" style="left:183px;top:579px"><i class="k">0</i><i class="r">0</i><i class="r">0</i><i class="g">0</i><i class="g">0</i><i class="b">0</i><i class="b">0</i></div><div class="m" style="left:244px;top:580px;color:#000;font-weight:bold">&#8211;&#8211;&#8211;</div><div class="h" style="left:285px;top:579px"><i class="k">0</i><i class="r">0</i><i class="r">0</i><i class="g">0</i><i class="g">0</i><i class="b">0</i><i class="b">0</i></div><div class="m" style="left:346px;top:580px;color:#000;font-weight:bold">&#8211;&#8211;&#8211;</div><div class="h" style="left:387px;top:579px"><i class="k">0</i><i class="r">0</i><i class="r">0</i><i class="g">0</i><i class="g">0</i><i class="b">0</i><i class="b">0</i></div><div class="m" style="left:448px;top:580px;color:#000;font-weight:bold">&#8211;&#8211;&#8211;</div><div class="h" style="left:489px;top:579px"><i class="k">0</i><i class="r">0</i><i class="r">0</i><i class="g">0</i><i class="g">0</i><i class="b">0</i><i class="b">0</i></div><div class="m" style="left:550px;top:580px;color:#000;font-weight:bold">&#8211;&#8211;&#8211;</div><div class="h" style="left:591px;top:579px"><i class="k">0</i><i class="r">0</i><i class="r">0</i><i class="g">0</i><i class="g">0</i><i class="b">0</i><i class="b">0</i></div><div class="m" style="left:652px;top:580px;color:#000;font-weight:bold">&#8211;&#8211;&#8211;</div><div class="h" style="left:693px;top:579px"><i class="k">0</i><i class="r">0</i><i class="r">0</i><i class="g">0</i><i class="g">0</i><i class="b">0</i><i class="b">0</i></div><div class="m" style="left:754px;top:580px;color:#000;font-weight:bold">&#8211;&#8211;&#8211;</div><div class="h" style="left:795px;top:579px"><i class="k">0</i><i class="r">0</i><i class="r">0</i><i class="g">0</i><i class="g">0</i><i class="b">0</i><i class="b">0</i></div><div class="h" style="left:3px;top:592px"><i class="k">0</i><i class="k">0</i><i class="k">5</i><i class="k">8</i></div><div class="m" style="left:40px;top:593px;color:#000;">F&#8211;6</div><div class="h" style="left:81px;top:592px"><i class="k">9</i><i class="r">0</i><i class="r">C</i><i class="g">4</i><i class="g">0</i><i class="b">0</i><i class="b">0</i></div><div class="m" style="left:142px;top:593px;color:#000;font-weight:bold">&#8211;&#8211;&#8211;</div><div class="h" style="left:183px;top:592px"><i class="k">0</i><i class="r">0</i><i class="r">0</i><i class="g">0</i><i class="g">0</i><i class="b">0</i><i class="b">0</i></div><div class="m" style="left:244px;top:593px;color:#000;font-weight:bold">&#8211;&#8211;&#8211;</div><div class="h" style="left:285px;top:592px"><i class="k">0</i><i class="r">0</i><i class="r">0</i><i class="g">0</i><i class="g">0</i><i class="b">0</i><i class="b">0</i></div><div class="m" style="left:346px;top:593px;color:#000;font-weight:bold">&#8211;&#8211;&#8211;</div><div class="h" style="left:387px;top:592px"><i class="k">0</i><i class="r">0</i><i class="r">0</i><i class="g">0</i><i class="g">0</i><i class="b">0</i><i class="b">0</i></div><div class="m" style="left:448px;top:593px;color:#000;font-weight:bold">&#8211;&#8211;&#8211;</div><div class="h" style="left:489px;top:592px"><i class="k">0</i><i class="r">0</i><i class="r">0</i><i class="g">0</i><i class="g">0</i><i class="b">0</i><i class="b">0</i></div><div class="m" style="left:550px;top:593px;color:#000;font-weight:bold">&#8211;&#8211;&#8211;</div><div class="h" style="left:591px;top:592px"><i class="k">0</i><i class="r">0</i><i class="r">0</i><i class="g">0</i><i class="g">0</i><i class="b">0</i><i class="b">0</i></div><div class="m" style="left:652px;top:593px;color:#000;font-weight:bold">&#8211;&#8211;&#8211;</div><div class="h" style="left:693px;top:592px"><i class="k">0</i><i class="r">0</i><i class="r">0</i><i class="g">0</i><i class="g">0</i><i class="b">0</i><i class="b">0</i></div><div class="m" style="left:754px;top:593px;color:#000;font-weight:bold">&#8211;&#8211;&#8211;</div><div class="h" style="left:795px;top:592px"><i class="k">0</i><i class="r">0</i><i class="r">0</i><i class="g">0</i><i class="g">0</i><i class="b">0</i><i class="b">0</i></div><div class="h" style="left:3px;top:605px"><i class="k">0</i><i class="k">0</i><i class="k">5</i><i class="k">9</i></div><div class="m" style="left:40px;top:606px;color:#000;font-weight:bold">&#8211;&#8211;&#8211;</div><div class="h" style="left:81px;top:605px"><i class="k">0</i><i class="r">0</i><i class="r">0</i><i class="g">0</i><i class="g">0</i><i class="b">0</i><i class="b">0</i></div><div class="m" style="left:142px;top:606px;color:#000;">DEF</div><div class="h" style="left:183px;top:605px"><i class="k">5</i><i class="r">0</i><i class="r">F</i><i class="g">F</i><i class="g">1</i><i class="b">0</i><i class="b">0</i></div><div class="m" style="left:244px;top:606px;color:#000;font-weight:bold">&#8211;&#8211;&#8211;</div><div class="h" style="left:285px;top:605px"><i class="k">0</i><i class="r">0</i><i class="r">0</i><i class="g">0</i><i class="g">0</i><i class="b">0</i><i class="b">0</i></div><div class="m" style="left:346px;top:606px;color:#000;font-weight:bold">&#8211;&#8211;&#8211;</div><div class="h" style="left:387px;top:605px"><i class="k">0</i><i class="r">0</i><i class="r">0</i><i class="g">0</i><i class="g">0</i><i class="b">0</i><i class="b">0</i></div><div class="m" style="left:448px;top:606px;color:#000;font-weight:bold">&#8211;&#8211;&#8211;</div><div class="h" style="left:489px;top:605px"><i class="k">0</i><i class="r">0</i><i class="r">0</i><i class="g">0</i><i class="g">0</i><i class="b">0</i><i class="b">0</i></div><div class="m" style="left:550px;top:606px;color:#000;font-weight:bold">&#8211;&#8211;&#8211;</div><div class="h" style="left:591px;top:605px"><i class="k">0</i><i class="r">0</i><i class="r">0</i><i class="g">0</i><i class="g">0</i><i class="b">0</i><i class="b">0</i></div><div class="m" style="left:652px;top:606px;color:#000;font-weight:bold">&#8211;&#8211;&#8211;</div><div class="h" style="left:693px;top:605px"><i class="k">0</i><i class="r">0</i><i class="r">0</i><i class="g">0</i><i class="g">0</i><i class="b">0</i><i class="b">0</i></div><div class="m" style="left:754px;top:606px;color:#000;font-weight:bold">&#8211;&#8211;&#8211;</div><div class="h" style="left:795px;top:605px"><i class="k">0</i><i class="r">0</i><i class="r">0</i><i class="g">0</i><i class="g">0</i><i class="b">0</i><i class="b">0</i></div><div class="h" style="left:3px;top:618px"><i class="k">0</i><i class="k">0</i><i class="k">6</i><i class="k">0</i></div><div class="m" style="left:40px;top:619px;color:#000;font-weight:bold">&#8211;&#8211;&#8211;</div><div class="h" style="left:81px;top:618px"><i class="k">0</i><i class="r">0</i><i class="r">0</i><i class="g">0</i><i class="g">0</i><i class="b">0</i><i class="b">0</i></div><div class="m" style="left:142px;top:619px;color:#000;">DEF</div><div class="h" style="left:183px;top:618px"><i class="k">5</i><i class="r">0</i><i class="r">C</i><i class="g">7</i><i class="g">F</i><i class="b">0</i><i class="b">0</i></div><div class="m" style="left:244px;top:619px;color:#000;font-weight:bold">&#8211;&#8211;&#8211;</div><div class="h" style="left:285px;top:618px"><i class="k">0</i><i class="r">0</i><i class="r">0</i><i class="g">0</i><i class="g">0</i><i class="b">0</i><i class="b">0</i></div><div class="m" style="left:346px;top:619px;color:#000;font-weight:bold">&#8211;&#8211;&#8211;</div><div class="h" style="left:387px;top:618px"><i class="k">0</i><i class="r">0</i><i class="r">0</i><i class="g">0</i><i class="g">0</i><i class="b">0</i><i class="b">0</i></div><div class="m" style="left:448px;top:619px;color:#000;font-weight:bold">&#8211;&#8211;&#8211;</div><div class="h" style="left:489px;top:618px"><i class="k">0</i><i class="r">0</i><i class="r">0</i><i class="g">0</i><i class="g">0</i><i class="b">0</i><i class="b">0</i></div><div class="m" style="left:550px;top:619px;color:#000;font-weight:bold">&#8211;&#8211;&#8211;</div><div class="h" style="left:591px;top:618px"><i class="k">0</i><i class="r">0</i><i class="r">0</i><i class="g">0</i><i class="g">0</i><i class="b">0</i><i class="b">0</i></div><div class="m" style="left:652px;top:619px;color:#000;font-weight:bold">&#8211;&#8211;&#8211;</div><div class="h" style="left:693px;top:618px"><i class="k">0</i><i class="r">0</i><i class="r">0</i><i class="g">0</i><i class="g">0</i><i class="b">0</i><i class="b">0</i></div><div class="m" style="left:754px;top:619px;color:#000;font-weight:bold">&#8211;&#8211;&#8211;</div><div class="h" style="left:795px;top:618px"><i class="k">0</i><i class="r">0</i><i class="r">0</i><i class="g">0</i><i class="g">0</i><i class="b">0</i><i class="b">0</i></div><div class="h" style="left:3px;top:631px"><i class="k">0</i><i class="k">0</i><i class="k">6</i><i class="k">1</i></div><div class="m" style="left:40px;top:632px;color:#000;font-weight:bold">&#8211;&#8211;&#8211;</div><div class="h" style="left:81px;top:631px"><i class="k">0</i><i class="r">0</i><i class="r">0</i><i class="g">0</i><i class="g">0</i><i class="b">0</i><i class="b">0</i></div><div class="m" style="left:142px;top:632px;color:#000;font-weight:bold">&#8211;&#8211;&#8211;</div><div class="h" style="left:183px;top:631px"><i class="k">0</i><i class="r">0</i><i class="r">0</i><i class="g">0</i><i class="g">0</i><i class="b">0</i><i class="b">0</i></div><div class="m" style="left:244px;top:632px;color:#000;font-weight:bold">&#8211;&#8211;&#8211;</div><div class="h" style="left:285px;top:631px"><i class="k">0</i><i class="r">0</i><i class="r">0</i><i class="g">0</i><i class="g">0</i><i class="b">0</i><i class="b">0</i></div><div class="m" style="left:346px;top:632px;color:#000;font-weight:bold">&#8211;&#8211;&#8211;</div><div class="h" style="left:387px;top:631px"><i class="k">0</i><i class="r">0</i><i class="r">0</i><i class="g">0</i><i class="g">0</i><i class="b">0</i><i class="b">0</i></div><div class="m" style="left:448px;top:632px;color:#000;font-weight:bold">&#8211;&#8211;&#8211;</div><div class="h" style="left:489px;top:631px"><i class="k">0</i><i class="r">0</i><i class="r">0</i><i class="g">0</i><i class="g">0</i><i class="b">0</i><i class="b">0</i></div><div class="m" style="left:550px;top:632px;color:#000;font-weight:bold">&#8211;&#8211;&#8211;</div><div class="h" style="left:591px;top:631px"><i class="k">0</i><i class="r">0</i><i class="r">0</i><i class="g">0</i><i class="g">0</i><i class="b">0</i><i class="b">0</i></div><div class="m" style="left:652px;top:632px;color:#000;font-weight:bold">&#8211;&#8211;&#8211;</div><div class="h" style="left:693px;top:631px"><i class="k">0</i><i class="r">0</i><i class="r">0</i><i class="g">0</i><i class="g">0</i><i class="b">0</i><i class="b">0</i></div><div class="m" style="left:754px;top:632px;color:#000;font-weight:bold">&#8211;&#8211;&#8211;</div><div class="h" style="left:795px;top:631px"><i class="k">0</i><i class="r">0</i><i class="r">0</i><i class="g">0</i><i class="g">0</i><i class="b">0</i><i class="b">0</i></div><div class="h" style="left:3px;top:644px"><i class="k">0</i><i class="k">0</i><i class="k">6</i><i class="k">2</i></div><div class="m" style="left:40px;top:645px;color:#000;">F&#8211;6</div><div class="h" style="left:81px;top:644px"><i class="k">9</i><i class="r">0</i><i class="r">0</i><i class="g">0</i><i class="g">0</i><i class="b">0</i><i class="b">0</i></div><div class="m" style="left:142px;top:645px;color:#000;">DEF</div><div class="h" style="left:183px;top:644px"><i class="k">5</i><i class="r">0</i><i class="r">C</i><i class="g">7</i><i class="g">F</i><i class="b">0</i><i class="b">0</i></div><div class="m" style="left:244px;top:645px;color:#000;font-weight:bold">&#8211;&#8211;&#8211;</div><div class="h" style="left:285px;top:644px"><i class="k">0</i><i class="r">0</i><i class="r">0</i><i class="g">0</i><i class="g">0</i><i class="b">0</i><i class="b">0</i></div><div class="m" style="left:346px;top:645px;color:#000;font-weight:bold">&#8211;&#8211;&#8211;</div><div class="h" style="left:387px;top:644px"><i class="k">0</i><i class="r">0</i><i class="r">0</i><i class="g">0</i><i class="g">0</i><i class="b">0</i><i class="b">0</i></div><div class="m" style="left:448px;top:645px;color:#000;font-weight:bold">&#8211;&#8211;&#8211;</div><div class="h" style="left:489px;top:644px"><i class="k">0</i><i class="r">0</i><i class="r">0</i><i class="g">0</i><i class="g">0</i><i class="b">0</i><i class="b">0</i></div><div class="m" style="left:550px;top:645px;color:#000;font-weight:bold">&#8211;&#8211;&#8211;</div><div class="h" style="left:591px;top:644px"><i class="k">0</i><i class="r">0</i><i class="r">0</i><i class="g">0</i><i class="g">0</i><i class="b">0</i><i class="b">0</i></div><div class="m" style="left:652px;top:645px;color:#000;font-weight:bold">&#8211;&#8211;&#8211;</div><div class="h" style="left:693px;top:644px"><i class="k">0</i><i class="r">0</i><i class="r">0</i><i class="g">0</i><i class="g">0</i><i class="b">0</i><i class="b">0</i></div><div class="m" style="left:754px;top:645px;color:#000;font-weight:bold">&#8211;&#8211;&#8211;</div><div class="h" style="left:795px;top:644px"><i class="k">0</i><i class="r">0</i><i class="r">0</i><i class="g">0</i><i class="g">0</i><i class="b">0</i><i class="b">0</i></div><div class="h" style="left:3px;top:657px"><i class="k">0</i><i class="k">0</i><i class="k">6</i><i class="k">3</i></div><div class="m" style="left:40px;top:658px;color:#000;font-weight:bold">&#8211;&#8211;&#8211;</div><div class="h" style="left:81px;top:657px"><i class="k">0</i><i class="r">0</i><i class="r">0</i><i class="g">0</i><i class="g">0</i><i class="b">0</i><i class="b">0</i></div><div class="m" style="left:142px;top:658px;color:#000;font-weight:bold">&#8211;&#8211;&#8211;</div><div class="h" style="left:183px;top:657px"><i class="k">0</i><i class="r">0</i><i class="r">0</i><i class="g">0</i><i class="g">0</i><i class="b">0</i><i class="b">0</i></div><div class="m" style="left:244px;top:658px;color:#000;font-weight:bold">&#8211;&#8211;&#8211;</div><div class="h" style="left:285px;top:657px"><i class="k">0</i><i class="r">0</i><i class="r">0</i><i class="g">0</i><i class="g">0</i><i class="b">0</i><i class="b">0</i></div><div class="m" style="left:346px;top:658px;color:#000;font-weight:bold">&#8211;&#8211;&#8211;</div><div class="h" style="left:387px;top:657px"><i class="k">0</i><i class="r">0</i><i class="r">0</i><i class="g">0</i><i class="g">0</i><i class="b">0</i><i class="b">0</i></div><div class="m" style="left:448px;top:658px;color:#000;font-weight:bold">&#8211;&#8211;&#8211;</div><div class="h" style="left:489px;top:657px"><i class="k">0</i><i class="r">0</i><i class="r">0</i><i class="g">0</i><i class="g">0</i><i class="b">0</i><i class="b">0</i></div><div class="m" style="left:550px;top:658px;color:#000;font-weight:bold">&#8211;&#8211;&#8211;</div><div class="h" style="left:591px;top:657px"><i class="k">0</i><i class="r">0</i><i class="r">0</i><i class="g">0</i><i class="g">0</i><i class="b">0</i><i class="b">0</i></div><div class="m" style="left:652px;top:658px;color:#000;font-weight:bold">&#8211;&#8211;&#8211;</div><div class="h" style="left:693px;top:657px"><i class="k">0</i><i class="r">0</i><i class="r">0</i><i class="g">0</i><i class="g">0</i><i class="b">0</i><i class="b">0</i></div><div class="m" style="left:754px;top:658px;color:#000;font-weight:bold">&#8211;&#8211;&#8211;</div><div class="h" style="left:795px;top:657px"><i class="k">0</i><i class="r">0</i><i class="r">0</i><i class="g">0</i><i class="g">0</i><i class="b">0</i><i class="b">0</i></div>
<div style="left:0px;top:503px;width:2px;height:170px;background:#283040;"></div>
<div style="left:1009px;top:503px;width:13px;height:170px;background:#b8c4d0;"></div>
<div style="left:1009px;top:512px;width:13px;height:39px;background:#90a2b8;border-top:1px solid #c8d2de;border-left:1px solid #c8d2de;border-right:1px solid #0c1018;border-bottom:1px solid #0c1018;box-sizing:border-box;"></div>
<div style="left:1009px;top:661px;width:13px;height:12px;background:#90a2b8;border-top:1px solid #c8d2de;border-left:1px solid #c8d2de;border-right:1px solid #0c1018;border-bottom:1px solid #0c1018;box-sizing:border-box;"><svg width="11" height="10" style="position:absolute;left:0;top:0"><path d="M2 3 L9 3 L5.5 6.5Z" fill="#101010"/></svg></div>
<div style="left:0px;top:673px;width:1023px;height:42px;background:#8195ad;"></div>
<div style="left:0px;top:676px;width:111px;height:20px;border-top:1px solid #56667c;border-left:1px solid #56667c;border-right:1px solid #b8c6d4;border-bottom:1px solid #b8c6d4;"></div>
<div class="t" style="left:3px;top:680px;transform:scaleX(0.9);font-size:12px;">Song 01/01</div>
<div style="left:112px;top:676px;width:152px;height:20px;border-top:1px solid #56667c;border-left:1px solid #56667c;border-right:1px solid #b8c6d4;border-bottom:1px solid #b8c6d4;"></div>
<div class="t" style="left:115px;top:680px;transform:scaleX(0.9);font-size:12px;">Section 001/001</div>
<div style="left:265px;top:676px;width:132px;height:20px;border-top:1px solid #56667c;border-left:1px solid #56667c;border-right:1px solid #b8c6d4;border-bottom:1px solid #b8c6d4;"></div>
<div class="t" style="left:268px;top:680px;transform:scaleX(0.9);font-size:12px;">Sequence 005/038</div>
<div style="left:398px;top:676px;width:265px;height:20px;border-top:1px solid #56667c;border-left:1px solid #56667c;border-right:1px solid #b8c6d4;border-bottom:1px solid #b8c6d4;"></div>
<div class="t" style="left:401px;top:680px;transform:scaleX(0.9);font-size:12px;">Block 001/029:</div>
<div style="left:664px;top:676px;width:100px;height:20px;border-top:1px solid #56667c;border-left:1px solid #56667c;border-right:1px solid #b8c6d4;border-bottom:1px solid #b8c6d4;"></div>
<div class="t" style="left:667px;top:680px;transform:scaleX(0.9);font-size:12px;">Line 43/64</div>
<div style="left:765px;top:676px;width:122px;height:20px;border-top:1px solid #56667c;border-left:1px solid #56667c;border-right:1px solid #b8c6d4;border-bottom:1px solid #b8c6d4;"></div>
<div class="t" style="left:768px;top:680px;transform:scaleX(0.9);font-size:12px;">Track 01/08</div>
<div style="left:888px;top:676px;width:134px;height:20px;border-top:1px solid #56667c;border-left:1px solid #56667c;border-right:1px solid #b8c6d4;border-bottom:1px solid #b8c6d4;"></div>
<div class="t" style="left:891px;top:680px;transform:scaleX(0.9);font-size:12px;">Command Page 1/1</div>
<div style="left:0px;top:697px;width:1023px;height:18px;border-top:1px solid #56667c;border-left:1px solid #b8c6d4;"></div>
<div class="t" style="left:3px;top:700px;transform:scaleX(0.9);font-size:12px;">Ready.</div>
<div style="left:0px;top:127px;width:446px;height:378px;background:#8195ad;border-top:1px solid #b8c4d0;border-left:1px solid #b8c4d0;border-right:1px solid #b0bccc;border-bottom:2px solid #0c1018;"></div>
<div style="left:2px;top:129px;width:430px;height:19px;background:linear-gradient(#7c7c7c,#878480 40%,#858280 70%,#7a7e7c);"></div>
<svg style="position:absolute;left:3px;top:130px" width="18" height="18"><rect x="1" y="1" width="15" height="16" fill="#f0f020" stroke="#101010" stroke-width="1.5"/><rect x="2" y="3" width="13" height="7" fill="#7020a0"/><path d="M4 5 L13 5 M4 7 L13 7" stroke="#e04060"/><path d="M4 13 L13 13" stroke="#a0a000"/></svg>
<div class="t" style="left:22px;top:133px;transform:scaleX(0.97);font-weight:bold;font-size:12px;color:#d0d0d0;">Instrument Properties</div>
<div style="left:432px;top:131px;width:14px;height:15px;background:#b0bac6;border-top:1px solid #c8d2de;border-left:1px solid #c8d2de;border-right:1px solid #0c1018;border-bottom:1px solid #0c1018;box-sizing:border-box;"><svg width="12" height="13" style="position:absolute;left:0;top:0"><path d="M2.5 3 L9.5 10 M9.5 3 L2.5 10" stroke="#101010" stroke-width="1.8"/></svg></div>
<div class="t" style="left:13px;top:164px;transform:scaleX(0.87);">Name:</div>
<div style="left:50px;top:160px;width:278px;height:19px;background:#fff;border-top:1px solid #0c1018;border-left:1px solid #0c1018;border-right:1px solid #c8d2de;border-bottom:1px solid #c8d2de;box-sizing:border-box;"></div>
<div class="t" style="left:53px;top:164px;transform:scaleX(0.97);font-size:12px;">gb1</div>
<div class="t" style="left:336px;top:164px;transform:scaleX(0.87);">Length:</div>
<div style="left:373px;top:160px;width:56px;height:17px;border-top:1px solid #56667c;border-left:1px solid #56667c;border-right:1px solid #b8c6d4;border-bottom:1px solid #b8c6d4;"></div>
<div class="t" style="left:376px;top:162px;transform:scaleX(0.87);font-size:12px;letter-spacing:0;color:#303a48;">108895</div>
<div class="t" style="left:13px;top:187px;transform:scaleX(0.87);">Instrument Number:</div>
<div style="left:110px;top:184px;width:27px;height:17px;background:#fff;border-top:1px solid #0c1018;border-left:1px solid #0c1018;border-right:1px solid #c8d2de;border-bottom:1px solid #c8d2de;box-sizing:border-box;"></div>
<div class="t" style="left:117px;top:187px;transform:scaleX(0.97);font-size:12px;">01</div>
<div style="left:139px;top:183px;width:198px;height:18px;background:#bcc6d2;"></div>
<div style="left:139px;top:183px;width:13px;height:18px;background:#90a2b8;border-top:1px solid #c8d2de;border-left:1px solid #c8d2de;border-right:1px solid #0c1018;border-bottom:1px solid #0c1018;box-sizing:border-box;"><svg width="11" height="16" style="position:absolute;left:0;top:0"><path d="M7 5 L7 11 L4 8Z" fill="#101010"/></svg></div>
<div style="left:152px;top:183px;width:6px;height:18px;background:#90a2b8;border-top:1px solid #c8d2de;border-left:1px solid #c8d2de;border-right:1px solid #0c1018;border-bottom:1px solid #0c1018;box-sizing:border-box;"></div>
<div style="left:323px;top:183px;width:13px;height:18px;background:#90a2b8;border-top:1px solid #c8d2de;border-left:1px solid #c8d2de;border-right:1px solid #0c1018;border-bottom:1px solid #0c1018;box-sizing:border-box;"><svg width="11" height="16" style="position:absolute;left:0;top:0"><path d="M4 5 L4 11 L7 8Z" fill="#101010"/></svg></div>
<div style="left:340px;top:183px;width:57px;height:18px;background:#90a2b8;border-top:1px solid #c8d2de;border-left:1px solid #c8d2de;border-right:1px solid #0c1018;border-bottom:1px solid #0c1018;box-sizing:border-box;border-right:2px solid #0c1018;border-bottom:2px solid #0c1018;"></div>
<div class="t" style="left:345px;top:186px;transform:scaleX(0.87);font-size:12px;">Last Used</div>
<div style="left:13px;top:208px;width:188px;height:30px;border:1px solid #56667c;box-shadow:1px 1px 0 #b8c6d4, inset 1px 1px 0 #b8c6d4;"></div>
<div class="t" style="left:21px;top:202px;transform:scaleX(0.87);background:#8195ad;padding:0 2px;font-size:12px;">Instrument Type</div>
<svg style="position:absolute;left:24px;top:217px" width="12" height="12"><circle cx="6" cy="6" r="5.5" fill="#fff" stroke="#56667c"/><path d="M2 9 A5 5 0 0 1 9 2" stroke="#101010" stroke-width="1" fill="none"/><circle cx="6" cy="6" r="2" fill="#101010"/></svg>
<div class="t" style="left:40px;top:218px;transform:scaleX(0.87);font-size:12px;">Sample</div>
<svg style="position:absolute;left:83px;top:217px" width="12" height="12"><circle cx="6" cy="6" r="5.5" fill="#fff" stroke="#56667c"/><path d="M2 9 A5 5 0 0 1 9 2" stroke="#101010" stroke-width="1" fill="none"/></svg>
<div class="t" style="left:98px;top:218px;transform:scaleX(0.87);font-size:12px;">Synthetic</div>
<svg style="position:absolute;left:150px;top:217px" width="12" height="12"><circle cx="6" cy="6" r="5.5" fill="#fff" stroke="#56667c"/><path d="M2 9 A5 5 0 0 1 9 2" stroke="#101010" stroke-width="1" fill="none"/></svg>
<div class="t" style="left:167px;top:218px;transform:scaleX(0.87);font-size:12px;">MIDI</div>
<div class="t" style="left:235px;top:213px;transform:scaleX(0.87);font-size:12px;">Default Frequency:</div>
<div style="left:335px;top:209px;width:36px;height:21px;border:1px solid #0c1018;background:#98a8bc;box-shadow:inset 1px 1px 0 #d0dae4, inset -1px -2px 0 #304058;"></div>
<div class="t" style="left:342px;top:213px;transform:scaleX(0.95);font-size:12px;letter-spacing:1px;">C&minus;6</div>
<div style="left:372px;top:210px;width:52px;height:19px;background:#fff;border-top:1px solid #0c1018;border-left:1px solid #0c1018;border-right:1px solid #c8d2de;border-bottom:1px solid #c8d2de;box-sizing:border-box;"></div>
<div class="t" style="left:375px;top:214px;transform:scaleX(0.97);font-size:12px;">33897</div>
<div style="left:13px;top:245px;width:426px;height:57px;border:1px solid #56667c;box-shadow:1px 1px 0 #b8c6d4, inset 1px 1px 0 #b8c6d4;"></div>
<div class="t" style="left:21px;top:239px;transform:scaleX(0.87);background:#8195ad;padding:0 2px;font-size:12px;">General Properties</div>
<div class="t" style="left:37px;top:259px;transform:scaleX(0.87);font-size:12px;">Volume</div>
<div style="left:84px;top:256px;width:55px;height:18px;background:#fff;border-top:1px solid #0c1018;border-left:1px solid #0c1018;border-right:1px solid #c8d2de;border-bottom:1px solid #c8d2de;box-sizing:border-box;"></div>
<div class="t" style="left:87px;top:259px;transform:scaleX(0.97);font-size:12px;">127</div>
<div style="left:126px;top:257px;width:12px;height:8px;background:#90a2b8;border-top:1px solid #c8d2de;border-left:1px solid #c8d2de;border-right:1px solid #0c1018;border-bottom:1px solid #0c1018;box-sizing:border-box;"><svg width="10" height="8" style="position:absolute;left:0;top:0"><path d="M3 5 L7 5 L5 3Z" fill="#101010"/></svg></div>
<div style="left:126px;top:265px;width:12px;height:8px;background:#90a2b8;border-top:1px solid #c8d2de;border-left:1px solid #c8d2de;border-right:1px solid #0c1018;border-bottom:1px solid #0c1018;box-sizing:border-box;"><svg width="10" height="8" style="position:absolute;left:0;top:0"><path d="M3 3 L7 3 L5 5Z" fill="#101010"/></svg></div>
<div class="t" style="left:146px;top:259px;transform:scaleX(0.87);font-size:12px;">Hex:</div>
<div class="t" style="left:175px;top:259px;transform:scaleX(0.87);font-size:12px;">7F</div>
<div class="t" style="left:199px;top:259px;transform:scaleX(0.87);font-size:12px;">Hold:</div>
<div style="left:233px;top:256px;width:56px;height:18px;background:#fff;border-top:1px solid #0c1018;border-left:1px solid #0c1018;border-right:1px solid #c8d2de;border-bottom:1px solid #c8d2de;box-sizing:border-box;"></div>
<div class="t" style="left:236px;top:259px;transform:scaleX(0.97);font-size:12px;">0</div>
<div style="left:276px;top:257px;width:12px;height:8px;background:#90a2b8;border-top:1px solid #c8d2de;border-left:1px solid #c8d2de;border-right:1px solid #0c1018;border-bottom:1px solid #0c1018;box-sizing:border-box;"><svg width="10" height="8" style="position:absolute;left:0;top:0"><path d="M3 5 L7 5 L5 3Z" fill="#101010"/></svg></div>
<div style="left:276px;top:265px;width:12px;height:8px;background:#90a2b8;border-top:1px solid #c8d2de;border-left:1px solid #c8d2de;border-right:1px solid #0c1018;border-bottom:1px solid #0c1018;box-sizing:border-box;"><svg width="10" height="8" style="position:absolute;left:0;top:0"><path d="M3 3 L7 3 L5 5Z" fill="#101010"/></svg></div>
<div style="left:326px;top:259px;width:12px;height:12px;background:#fff;border-top:1px solid #0c1018;border-left:1px solid #0c1018;border-right:1px solid #c8d2de;border-bottom:1px solid #c8d2de;box-sizing:border-box;"></div>
<div class="t" style="left:343px;top:259px;transform:scaleX(0.87);font-size:12px;">Disabled</div>
<div class="t" style="left:23px;top:281px;transform:scaleX(0.87);font-size:12px;">Transpose</div>
<div style="left:84px;top:278px;width:55px;height:18px;background:#fff;border-top:1px solid #0c1018;border-left:1px solid #0c1018;border-right:1px solid #c8d2de;border-bottom:1px solid #c8d2de;box-sizing:border-box;"></div>
<div class="t" style="left:87px;top:281px;transform:scaleX(0.97);font-size:12px;">10</div>
<div style="left:126px;top:279px;width:12px;height:8px;background:#90a2b8;border-top:1px solid #c8d2de;border-left:1px solid #c8d2de;border-right:1px solid #0c1018;border-bottom:1px solid #0c1018;box-sizing:border-box;"><svg width="10" height="8" style="position:absolute;left:0;top:0"><path d="M3 5 L7 5 L5 3Z" fill="#101010"/></svg></div>
<div style="left:126px;top:287px;width:12px;height:8px;background:#90a2b8;border-top:1px solid #c8d2de;border-left:1px solid #c8d2de;border-right:1px solid #0c1018;border-bottom:1px solid #0c1018;box-sizing:border-box;"><svg width="10" height="8" style="position:absolute;left:0;top:0"><path d="M3 3 L7 3 L5 5Z" fill="#101010"/></svg></div>
<div class="t" style="left:190px;top:281px;transform:scaleX(0.87);font-size:12px;">Decay:</div>
<div style="left:233px;top:278px;width:56px;height:18px;background:#fff;border-top:1px solid #0c1018;border-left:1px solid #0c1018;border-right:1px solid #c8d2de;border-bottom:1px solid #c8d2de;box-sizing:border-box;"></div>
<div class="t" style="left:236px;top:281px;transform:scaleX(0.97);font-size:12px;">0</div>
<div style="left:276px;top:279px;width:12px;height:8px;background:#90a2b8;border-top:1px solid #c8d2de;border-left:1px solid #c8d2de;border-right:1px solid #0c1018;border-bottom:1px solid #0c1018;box-sizing:border-box;"><svg width="10" height="8" style="position:absolute;left:0;top:0"><path d="M3 5 L7 5 L5 3Z" fill="#101010"/></svg></div>
<div style="left:276px;top:287px;width:12px;height:8px;background:#90a2b8;border-top:1px solid #c8d2de;border-left:1px solid #c8d2de;border-right:1px solid #0c1018;border-bottom:1px solid #0c1018;box-sizing:border-box;"><svg width="10" height="8" style="position:absolute;left:0;top:0"><path d="M3 3 L7 3 L5 5Z" fill="#101010"/></svg></div>
<div style="left:13px;top:310px;width:426px;height:55px;border:1px solid #56667c;box-shadow:1px 1px 0 #b8c6d4, inset 1px 1px 0 #b8c6d4;"></div>
<div class="t" style="left:21px;top:304px;transform:scaleX(0.87);background:#8195ad;padding:0 2px;font-size:12px;">Sample Properties</div>
<div style="left:23px;top:324px;width:12px;height:12px;background:#fff;border-top:1px solid #0c1018;border-left:1px solid #0c1018;border-right:1px solid #c8d2de;border-bottom:1px solid #c8d2de;box-sizing:border-box;"></div>
<div class="t" style="left:40px;top:324px;transform:scaleX(0.87);font-size:12px;">Stereo</div>
<div style="left:87px;top:324px;width:12px;height:12px;background:#8195ad;border-top:1px solid #0c1018;border-left:1px solid #0c1018;border-right:1px solid #c8d2de;border-bottom:1px solid #c8d2de;box-sizing:border-box;"></div>
<div class="t" style="left:104px;top:324px;transform:scaleX(0.87);font-size:12px;color:#5c6c84;text-shadow:1px 1px 0 #c4d0dc;">Loop On</div>
<div class="t" style="left:187px;top:320px;transform:scaleX(0.87);font-size:12px;">Loop Start:</div>
<div style="left:244px;top:317px;width:66px;height:19px;background:#fff;border-top:1px solid #0c1018;border-left:1px solid #0c1018;border-right:1px solid #c8d2de;border-bottom:1px solid #c8d2de;box-sizing:border-box;"></div>
<div class="t" style="left:247px;top:321px;transform:scaleX(0.97);font-size:12px;">0</div>
<div class="t" style="left:317px;top:320px;transform:scaleX(0.87);font-size:12px;">Finetune:</div>
<div style="left:368px;top:317px;width:56px;height:19px;background:#fff;border-top:1px solid #0c1018;border-left:1px solid #0c1018;border-right:1px solid #c8d2de;border-bottom:1px solid #c8d2de;box-sizing:border-box;"></div>
<div class="t" style="left:371px;top:321px;transform:scaleX(0.97);font-size:12px;">-6</div>
<div style="left:411px;top:318px;width:12px;height:8px;background:#90a2b8;border-top:1px solid #c8d2de;border-left:1px solid #c8d2de;border-right:1px solid #0c1018;border-bottom:1px solid #0c1018;box-sizing:border-box;"><svg width="10" height="8" style="position:absolute;left:0;top:0"><path d="M3 5 L7 5 L5 3Z" fill="#101010"/></svg></div>
<div style="left:411px;top:326px;width:12px;height:9px;background:#90a2b8;border-top:1px solid #c8d2de;border-left:1px solid #c8d2de;border-right:1px solid #0c1018;border-bottom:1px solid #0c1018;box-sizing:border-box;"><svg width="10" height="8" style="position:absolute;left:0;top:0"><path d="M3 3 L7 3 L5 5Z" fill="#101010"/></svg></div>
<div style="left:23px;top:344px;width:12px;height:12px;background:#fff;border-top:1px solid #0c1018;border-left:1px solid #0c1018;border-right:1px solid #c8d2de;border-bottom:1px solid #c8d2de;box-sizing:border-box;"></div>
<svg style="position:absolute;left:23px;top:344px" width="12" height="12"><path d="M3 5.5 L5 8 L9.5 3" stroke="#101010" stroke-width="1.8" fill="none"/></svg>
<div class="t" style="left:40px;top:345px;transform:scaleX(0.87);font-size:12px;">16-Bit</div>
<div style="left:87px;top:344px;width:12px;height:12px;background:#fff;border-top:1px solid #0c1018;border-left:1px solid #0c1018;border-right:1px solid #c8d2de;border-bottom:1px solid #c8d2de;box-sizing:border-box;"></div>
<div class="t" style="left:104px;top:345px;transform:scaleX(0.87);font-size:12px;">Ping-Pong Loop</div>
<div class="t" style="left:190px;top:345px;transform:scaleX(0.87);font-size:12px;">Loop Len:</div>
<div style="left:244px;top:342px;width:66px;height:18px;background:#fff;border-top:1px solid #0c1018;border-left:1px solid #0c1018;border-right:1px solid #c8d2de;border-bottom:1px solid #c8d2de;box-sizing:border-box;"></div>
<div class="t" style="left:247px;top:345px;transform:scaleX(0.97);font-size:12px;">0</div>
<div style="left:13px;top:374px;width:426px;height:96px;border:1px solid #56667c;box-shadow:1px 1px 0 #b8c6d4, inset 1px 1px 0 #b8c6d4;"></div>
<div class="t" style="left:21px;top:368px;transform:scaleX(0.87);background:#8195ad;padding:0 2px;font-size:12px;">MIDI Properties</div>
<div class="t" style="left:17px;top:385px;transform:scaleX(0.87);font-size:12px;">Transmit Ch:</div>
<div style="left:81px;top:382px;width:55px;height:18px;background:#8195ad;border-top:1px solid #0c1018;border-left:1px solid #0c1018;border-right:1px solid #c8d2de;border-bottom:1px solid #c8d2de;box-sizing:border-box;"></div>
<div class="t" style="left:84px;top:385px;transform:scaleX(0.97);font-size:12px;color:#5c6c84;text-shadow:1px 1px 0 #c4d0dc;">0</div>
<div style="left:123px;top:383px;width:12px;height:8px;background:#90a2b8;border-top:1px solid #c8d2de;border-left:1px solid #c8d2de;border-right:1px solid #0c1018;border-bottom:1px solid #0c1018;box-sizing:border-box;"><svg width="10" height="8" style="position:absolute;left:0;top:0"><path d="M3 5 L7 5 L5 3Z" fill="#101010"/></svg></div>
<div style="left:123px;top:391px;width:12px;height:8px;background:#90a2b8;border-top:1px solid #c8d2de;border-left:1px solid #c8d2de;border-right:1px solid #0c1018;border-bottom:1px solid #0c1018;box-sizing:border-box;"><svg width="10" height="8" style="position:absolute;left:0;top:0"><path d="M3 3 L7 3 L5 5Z" fill="#101010"/></svg></div>
<div class="t" style="left:31px;top:408px;transform:scaleX(0.87);font-size:12px;">Input Ch:</div>
<div style="left:80px;top:405px;width:55px;height:18px;background:#fff;border-top:1px solid #0c1018;border-left:1px solid #0c1018;border-right:1px solid #c8d2de;border-bottom:1px solid #c8d2de;box-sizing:border-box;"></div>
<div class="t" style="left:83px;top:408px;transform:scaleX(0.97);font-size:12px;">0</div>
<div style="left:122px;top:406px;width:12px;height:8px;background:#90a2b8;border-top:1px solid #c8d2de;border-left:1px solid #c8d2de;border-right:1px solid #0c1018;border-bottom:1px solid #0c1018;box-sizing:border-box;"><svg width="10" height="8" style="position:absolute;left:0;top:0"><path d="M3 5 L7 5 L5 3Z" fill="#101010"/></svg></div>
<div style="left:122px;top:414px;width:12px;height:8px;background:#90a2b8;border-top:1px solid #c8d2de;border-left:1px solid #c8d2de;border-right:1px solid #0c1018;border-bottom:1px solid #0c1018;box-sizing:border-box;"><svg width="10" height="8" style="position:absolute;left:0;top:0"><path d="M3 3 L7 3 L5 5Z" fill="#101010"/></svg></div>
<div style="left:19px;top:429px;width:12px;height:12px;background:#8195ad;border-top:1px solid #0c1018;border-left:1px solid #0c1018;border-right:1px solid #c8d2de;border-bottom:1px solid #c8d2de;box-sizing:border-box;"></div>
<div class="t" style="left:38px;top:429px;transform:scaleX(0.92);font-size:12px;color:#5c6c84;text-shadow:1px 1px 0 #c4d0dc;">Don't send "Note Off"</div>
<div class="t" style="left:163px;top:382px;transform:scaleX(0.87);font-size:12px;">Device:</div>
<div style="left:205px;top:378px;width:223px;height:20px;background:#8195ad;border-top:1px solid #0c1018;border-left:1px solid #0c1018;border-right:1px solid #c8d2de;border-bottom:1px solid #c8d2de;box-sizing:border-box;"></div>
<div style="left:412px;top:380px;width:14px;height:16px;background:#90a2b8;border-top:1px solid #c8d2de;border-left:1px solid #c8d2de;border-right:1px solid #0c1018;border-bottom:1px solid #0c1018;box-sizing:border-box;"><svg width="12" height="14" style="position:absolute;left:0;top:0"><path d="M3 6 L8 6 L5.5 9Z" fill="#a8b4c4"/></svg></div>
<div class="t" style="left:143px;top:405px;transform:scaleX(0.87);font-size:12px;">Output Port:</div>
<div style="left:205px;top:402px;width:223px;height:19px;background:#8195ad;border-top:1px solid #0c1018;border-left:1px solid #0c1018;border-right:1px solid #c8d2de;border-bottom:1px solid #c8d2de;box-sizing:border-box;"></div>
<div class="t" style="left:209px;top:406px;transform:scaleX(0.92);font-size:12px;color:#5c6c84;text-shadow:1px 1px 0 #c4d0dc;">MIDI Mapper</div>
<div style="left:412px;top:404px;width:14px;height:15px;background:#90a2b8;border-top:1px solid #c8d2de;border-left:1px solid #c8d2de;border-right:1px solid #0c1018;border-bottom:1px solid #0c1018;box-sizing:border-box;"><svg width="12" height="14" style="position:absolute;left:0;top:0"><path d="M3 6 L8 6 L5.5 9Z" fill="#a8b4c4"/></svg></div>
<div class="t" style="left:173px;top:428px;transform:scaleX(0.87);font-size:12px;">Bank:</div>
<div style="left:205px;top:425px;width:56px;height:18px;background:#8195ad;border-top:1px solid #0c1018;border-left:1px solid #0c1018;border-right:1px solid #c8d2de;border-bottom:1px solid #c8d2de;box-sizing:border-box;"></div>
<div class="t" style="left:208px;top:428px;transform:scaleX(0.97);font-size:12px;color:#5c6c84;text-shadow:1px 1px 0 #c4d0dc;">0</div>
<div style="left:248px;top:426px;width:12px;height:8px;background:#90a2b8;border-top:1px solid #c8d2de;border-left:1px solid #c8d2de;border-right:1px solid #0c1018;border-bottom:1px solid #0c1018;box-sizing:border-box;"><svg width="10" height="8" style="position:absolute;left:0;top:0"><path d="M3 5 L7 5 L5 3Z" fill="#101010"/></svg></div>
<div style="left:248px;top:434px;width:12px;height:8px;background:#90a2b8;border-top:1px solid #c8d2de;border-left:1px solid #c8d2de;border-right:1px solid #0c1018;border-bottom:1px solid #0c1018;box-sizing:border-box;"><svg width="10" height="8" style="position:absolute;left:0;top:0"><path d="M3 3 L7 3 L5 5Z" fill="#101010"/></svg></div>
<div style="left:266px;top:425px;width:162px;height:18px;background:#8195ad;border-top:1px solid #0c1018;border-left:1px solid #0c1018;border-right:1px solid #c8d2de;border-bottom:1px solid #c8d2de;box-sizing:border-box;"></div>
<div style="left:412px;top:427px;width:14px;height:14px;background:#90a2b8;border-top:1px solid #c8d2de;border-left:1px solid #c8d2de;border-right:1px solid #0c1018;border-bottom:1px solid #0c1018;box-sizing:border-box;"><svg width="12" height="14" style="position:absolute;left:0;top:0"><path d="M3 6 L8 6 L5.5 9Z" fill="#a8b4c4"/></svg></div>
<div class="t" style="left:168px;top:450px;transform:scaleX(0.87);font-size:12px;">Preset:</div>
<div style="left:205px;top:446px;width:56px;height:18px;background:#8195ad;border-top:1px solid #0c1018;border-left:1px solid #0c1018;border-right:1px solid #c8d2de;border-bottom:1px solid #c8d2de;box-sizing:border-box;"></div>
<div class="t" style="left:208px;top:449px;transform:scaleX(0.97);font-size:12px;color:#5c6c84;text-shadow:1px 1px 0 #c4d0dc;">0</div>
<div style="left:248px;top:447px;width:12px;height:8px;background:#90a2b8;border-top:1px solid #c8d2de;border-left:1px solid #c8d2de;border-right:1px solid #0c1018;border-bottom:1px solid #0c1018;box-sizing:border-box;"><svg width="10" height="8" style="position:absolute;left:0;top:0"><path d="M3 5 L7 5 L5 3Z" fill="#101010"/></svg></div>
<div style="left:248px;top:455px;width:12px;height:8px;background:#90a2b8;border-top:1px solid #c8d2de;border-left:1px solid #c8d2de;border-right:1px solid #0c1018;border-bottom:1px solid #0c1018;box-sizing:border-box;"><svg width="10" height="8" style="position:absolute;left:0;top:0"><path d="M3 3 L7 3 L5 5Z" fill="#101010"/></svg></div>
<div style="left:266px;top:446px;width:162px;height:18px;background:#8195ad;border-top:1px solid #0c1018;border-left:1px solid #0c1018;border-right:1px solid #c8d2de;border-bottom:1px solid #c8d2de;box-sizing:border-box;"></div>
<div class="t" style="left:270px;top:449px;transform:scaleX(0.92);font-size:12px;color:#5c6c84;text-shadow:1px 1px 0 #c4d0dc;">(do not change preset)</div>
<div style="left:412px;top:448px;width:14px;height:14px;background:#90a2b8;border-top:1px solid #c8d2de;border-left:1px solid #c8d2de;border-right:1px solid #0c1018;border-bottom:1px solid #0c1018;box-sizing:border-box;"><svg width="12" height="14" style="position:absolute;left:0;top:0"><path d="M3 6 L8 6 L5.5 9Z" fill="#a8b4c4"/></svg></div>
<div style="left:185px;top:472px;width:75px;height:25px;background:#8598b0;border-top:1px solid #c8d2de;border-left:1px solid #c8d2de;border-right:1px solid #0c1018;border-bottom:1px solid #0c1018;box-sizing:border-box;"></div>
<div class="t" style="left:215px;top:479px;transform:scaleX(0.87);font-size:12px;">OK</div>
<div style="left:446px;top:110px;width:577px;height:403px;background:#8195ad;border-top:1px solid #c0ccd8;border-left:2px solid #b8c6d4;border-right:1px solid #0c1018;border-bottom:1px solid #0c1018;"></div>
<div style="left:449px;top:112px;width:572px;height:18px;background:#4e5c7c;"></div>
<svg style="position:absolute;left:451px;top:113px" width="18" height="17"><rect x="1" y="1" width="15" height="15" fill="#f0f020" stroke="#101010" stroke-width="1.5"/><rect x="2" y="3" width="13" height="7" fill="#7020a0"/><path d="M4 5 L13 5 M4 7 L13 7" stroke="#e04060"/><path d="M4 13 L13 13" stroke="#a0a000"/></svg>
<div class="t" style="left:469px;top:116px;font-weight:bold;font-size:12px;color:#f4f4f4;">MED Sample Editor [01: gb1]</div>
<div style="left:972px;top:114px;width:16px;height:14px;background:#90a2b8;border-top:1px solid #c8d2de;border-left:1px solid #c8d2de;border-right:1px solid #0c1018;border-bottom:1px solid #0c1018;box-sizing:border-box;"><svg width="14" height="12" style="position:absolute;left:0;top:0"><rect x="3" y="8" width="6" height="2" fill="#101010"/></svg></div>
<div style="left:988px;top:114px;width:16px;height:14px;background:#90a2b8;border-top:1px solid #c8d2de;border-left:1px solid #c8d2de;border-right:1px solid #0c1018;border-bottom:1px solid #0c1018;box-sizing:border-box;"><svg width="14" height="12" style="position:absolute;left:0;top:0"><rect x="3" y="1.5" width="8" height="8" fill="none" stroke="#101010" stroke-width="1"/><rect x="3" y="1" width="8" height="2" fill="#101010"/></svg></div>
<div style="left:1005px;top:114px;width:16px;height:14px;background:#90a2b8;border-top:1px solid #c8d2de;border-left:1px solid #c8d2de;border-right:1px solid #0c1018;border-bottom:1px solid #0c1018;box-sizing:border-box;"><svg width="14" height="12" style="position:absolute;left:0;top:0"><path d="M3 2 L10 9 M10 2 L3 9" stroke="#101010" stroke-width="1.6"/></svg></div>
<div class="t" style="left:455px;top:135px;transform:scaleX(0.87);font-size:12px;"><u>F</u>ile</div>
<div class="t" style="left:483px;top:135px;transform:scaleX(0.87);font-size:12px;"><u>E</u>dit</div>
<div class="t" style="left:513px;top:135px;transform:scaleX(0.87);font-size:12px;"><u>T</u>ools</div>
<div class="t" style="left:596px;top:135px;transform:scaleX(0.87);font-size:12px;"><u>L</u>oop</div>
<div class="t" style="left:632px;top:135px;transform:scaleX(0.87);font-size:12px;"><u>S</u>ettings</div>
<div style="left:545px;top:131px;width:46px;height:20px;border-top:1px solid #56667c;border-left:1px solid #56667c;border-right:1px solid #c0ccd8;border-bottom:1px solid #c0ccd8;"></div>
<div class="t" style="left:552px;top:135px;transform:scaleX(0.87);font-size:12px;">Effe<u>c</u>ts</div>
<div style="left:449px;top:151px;width:572px;height:1px;background:#3a4658;"></div>
<div style="left:449px;top:152px;width:572px;height:1px;background:#b8c6d4;"></div>
<div style="left:449px;top:154px;width:23px;height:23px;background:#90a2b8;border-top:1px solid #c8d2de;border-left:1px solid #c8d2de;border-right:1px solid #0c1018;border-bottom:1px solid #0c1018;box-sizing:border-box;"><svg width="21" height="21" style="position:absolute;left:0;top:0" viewBox="0 0 21 21"><path d="M2.5 17.5 L2.5 8.5 L6 8.5 L7 9.5 L12.5 9.5 L12.5 12" fill="#f0f070" stroke="#101010" stroke-width="1.3"/><path d="M2.5 17.5 L6 12 L17.5 12 L13.5 17.5Z" fill="#b4b040" stroke="#101010" stroke-width="1.3"/><path d="M9.5 7 Q12.5 3.5 15.5 6.5" stroke="#101010" stroke-width="1.6" fill="none"/><path d="M14 6 L17.5 5.5 L16.5 9Z" fill="#101010"/></svg></div>
<div style="left:472px;top:154px;width:23px;height:23px;background:#90a2b8;border-top:1px solid #c8d2de;border-left:1px solid #c8d2de;border-right:1px solid #0c1018;border-bottom:1px solid #0c1018;box-sizing:border-box;"><svg width="21" height="21" style="position:absolute;left:0;top:0" viewBox="0 0 21 21"><rect x="3.5" y="4.5" width="13" height="13" fill="#98a040" stroke="#101010" stroke-width="1.4"/><rect x="6" y="5" width="9" height="6" fill="#b8c0d0"/><path d="M6 11.5 L15 11.5" stroke="#101010" stroke-width="1.2"/><rect x="6.5" y="13" width="8" height="4.5" fill="#101010"/><rect x="12" y="14" width="2" height="2.5" fill="#c0c8c0"/></svg></div>
<div style="left:503px;top:154px;width:23px;height:23px;background:#90a2b8;border-top:1px solid #c8d2de;border-left:1px solid #c8d2de;border-right:1px solid #0c1018;border-bottom:1px solid #0c1018;box-sizing:border-box;"><svg width="21" height="21" style="position:absolute;left:0;top:0" viewBox="0 0 21 21"><path d="M8 2 L12 13 M14 2 L10 13" stroke="#101010" stroke-width="1.2"/><circle cx="8.5" cy="16" r="2.5" fill="none" stroke="#2020c0" stroke-width="1.5"/><circle cx="13.5" cy="16" r="2.5" fill="none" stroke="#2020c0" stroke-width="1.5"/></svg></div>
<div style="left:526px;top:154px;width:23px;height:23px;background:#90a2b8;border-top:1px solid #c8d2de;border-left:1px solid #c8d2de;border-right:1px solid #0c1018;border-bottom:1px solid #0c1018;box-sizing:border-box;"><svg width="21" height="21" style="position:absolute;left:0;top:0" viewBox="0 0 21 21"><path d="M3 3 L9 3 L11 5 L11 12 L3 12Z" fill="#fff" stroke="#101010" stroke-width="1.3"/><path d="M5 6 L9 6 M5 8 L9 8" stroke="#101010"/><path d="M9.5 8.5 L16 8.5 L19 11.5 L19 19.5 L9.5 19.5Z" fill="#fff" stroke="#101050" stroke-width="1.3"/><path d="M12 12 L17 12 M12 14 L17 14 M12 16 L17 16" stroke="#101050"/></svg></div>
<div style="left:549px;top:154px;width:23px;height:23px;background:#90a2b8;border-top:1px solid #c8d2de;border-left:1px solid #c8d2de;border-right:1px solid #0c1018;border-bottom:1px solid #0c1018;box-sizing:border-box;"><svg width="21" height="21" style="position:absolute;left:0;top:0" viewBox="0 0 21 21"></svg></div>
<div style="left:572px;top:154px;width:23px;height:23px;background:#90a2b8;border-top:1px solid #c8d2de;border-left:1px solid #c8d2de;border-right:1px solid #0c1018;border-bottom:1px solid #0c1018;box-sizing:border-box;"><svg width="21" height="21" style="position:absolute;left:0;top:0" viewBox="0 0 21 21"></svg></div>
<div style="left:595px;top:154px;width:23px;height:23px;background:#90a2b8;border-top:1px solid #c8d2de;border-left:1px solid #c8d2de;border-right:1px solid #0c1018;border-bottom:1px solid #0c1018;box-sizing:border-box;"><svg width="21" height="21" style="position:absolute;left:0;top:0" viewBox="0 0 21 21"></svg></div>
<div style="left:618px;top:154px;width:23px;height:23px;background:#90a2b8;border-top:1px solid #c8d2de;border-left:1px solid #c8d2de;border-right:1px solid #0c1018;border-bottom:1px solid #0c1018;box-sizing:border-box;"><svg width="21" height="21" style="position:absolute;left:0;top:0" viewBox="0 0 21 21"></svg></div>
<div style="left:641px;top:154px;width:23px;height:23px;background:#90a2b8;border-top:1px solid #c8d2de;border-left:1px solid #c8d2de;border-right:1px solid #0c1018;border-bottom:1px solid #0c1018;box-sizing:border-box;"><svg width="21" height="21" style="position:absolute;left:0;top:0" viewBox="0 0 21 21"></svg></div>
<div style="left:679px;top:154px;width:24px;height:23px;background:#90a2b8;border-top:1px solid #c8d2de;border-left:1px solid #c8d2de;border-right:1px solid #0c1018;border-bottom:1px solid #0c1018;box-sizing:border-box;"><svg width="22" height="21" style="position:absolute;left:0;top:0" viewBox="0 0 22 21"><path d="M8 4 L8 10 L12 7Z" fill="#101010"/><path d="M6 13 Q11 18 16 13" stroke="#101010" stroke-width="2" fill="none"/><path d="M2 13 L20 13" stroke="#e06080" stroke-width="1"/><path d="M8 14 L10 16 L12 14 L14 16" stroke="#40c0a0" stroke-width="1.2" fill="none"/></svg></div>
<div style="left:703px;top:154px;width:23px;height:23px;background:#90a2b8;border-top:1px solid #c8d2de;border-left:1px solid #c8d2de;border-right:1px solid #0c1018;border-bottom:1px solid #0c1018;box-sizing:border-box;"><svg width="21" height="21" style="position:absolute;left:0;top:0" viewBox="0 0 21 21"><rect x="7" y="7" width="8" height="8" fill="#1010a0"/></svg></div>
<div style="left:726px;top:154px;width:23px;height:23px;background:#90a2b8;border-top:1px solid #c8d2de;border-left:1px solid #c8d2de;border-right:1px solid #0c1018;border-bottom:1px solid #0c1018;box-sizing:border-box;"><svg width="21" height="21" style="position:absolute;left:0;top:0" viewBox="0 0 21 21"><circle cx="11" cy="11" r="5" fill="#f01010"/></svg></div>
<div style="left:757px;top:154px;width:23px;height:23px;background:#90a2b8;border-top:1px solid #c8d2de;border-left:1px solid #c8d2de;border-right:1px solid #0c1018;border-bottom:1px solid #0c1018;box-sizing:border-box;"><svg width="21" height="21" style="position:absolute;left:0;top:0" viewBox="0 0 21 21"><path d="M2 6 L20 6" stroke="#e01010" stroke-width="1.5"/><path d="M10 3 L13 9 L8 11 Z" fill="#101010"/><circle cx="6" cy="16" r="3" fill="none" stroke="#101010"/><path d="M4 16 L8 16 M6 14 L6 18 M10 16 L19 16" stroke="#101010" stroke-width="1.4"/></svg></div>
<div style="left:780px;top:154px;width:23px;height:23px;background:#90a2b8;border-top:1px solid #c8d2de;border-left:1px solid #c8d2de;border-right:1px solid #0c1018;border-bottom:1px solid #0c1018;box-sizing:border-box;"><svg width="21" height="21" style="position:absolute;left:0;top:0" viewBox="0 0 21 21"><circle cx="8" cy="8" r="5" fill="#60d0d0" stroke="#101010" stroke-width="1.5"/><path d="M5.5 8 L10.5 8 M8 5.5 L8 10.5" stroke="#101010" stroke-width="1.4"/><path d="M12 12 L18 18" stroke="#301010" stroke-width="2.5"/></svg></div>
<div style="left:803px;top:154px;width:23px;height:23px;background:#90a2b8;border-top:1px solid #c8d2de;border-left:1px solid #c8d2de;border-right:1px solid #0c1018;border-bottom:1px solid #0c1018;box-sizing:border-box;"><svg width="21" height="21" style="position:absolute;left:0;top:0" viewBox="0 0 21 21"><circle cx="8" cy="8" r="5" fill="#60d0d0" stroke="#101010" stroke-width="1.5"/><path d="M5.5 8 L10.5 8" stroke="#101010" stroke-width="1.4"/><path d="M12 12 L18 18" stroke="#301010" stroke-width="2.5"/></svg></div>
<div style="left:826px;top:154px;width:23px;height:23px;background:#90a2b8;border-top:1px solid #c8d2de;border-left:1px solid #c8d2de;border-right:1px solid #0c1018;border-bottom:1px solid #0c1018;box-sizing:border-box;"><svg width="21" height="21" style="position:absolute;left:0;top:0" viewBox="0 0 21 21"><circle cx="7" cy="5" r="2.5" fill="none" stroke="#101010"/><circle cx="14" cy="5" r="2.5" fill="none" stroke="#101010"/><path d="M2 3 L4 5 M19 3 L17 5" stroke="#101010"/><rect x="2" y="10" width="18" height="8" fill="#e8f0f0" stroke="#2020a0" stroke-width="1.2"/><path d="M3 14 L5 12 L6 16 L8 11 L9 16 L11 12 L12 16 L14 12 L15 15 L17 12 L19 14" stroke="#101010" fill="none"/></svg></div>
<div style="left:849px;top:154px;width:23px;height:23px;background:#90a2b8;border-top:1px solid #c8d2de;border-left:1px solid #c8d2de;border-right:1px solid #0c1018;border-bottom:1px solid #0c1018;box-sizing:border-box;"><svg width="21" height="21" style="position:absolute;left:0;top:0" viewBox="0 0 21 21"><rect x="2" y="5" width="18" height="12" fill="#101010"/><path d="M3 11 L5 8 L6 14 L8 7 L9 15 L11 8 L12 14 L14 8 L15 13 L17 9 L19 11" stroke="#fff" fill="none" stroke-width="1.2"/></svg></div>
<div style="left:880px;top:154px;width:23px;height:23px;background:#90a2b8;border-top:1px solid #c8d2de;border-left:1px solid #c8d2de;border-right:1px solid #0c1018;border-bottom:1px solid #0c1018;box-sizing:border-box;"><svg width="21" height="21" style="position:absolute;left:0;top:0" viewBox="0 0 21 21"><path d="M0 9.5 L20 9.5" stroke="#c080c0" stroke-width="1"/><rect x="4" y="5" width="13" height="11" fill="#d8d4ec" stroke="#101070" stroke-width="1.4"/><path d="M4 10.5 L17 10.5" stroke="#e02020" stroke-width="1.6"/><path d="M4 13 L17 13" stroke="#90b0e0"/></svg></div>
<div style="left:903px;top:154px;width:23px;height:23px;background:#90a2b8;border-top:1px solid #c8d2de;border-left:1px solid #c8d2de;border-right:1px solid #0c1018;border-bottom:1px solid #0c1018;box-sizing:border-box;"><svg width="21" height="21" style="position:absolute;left:0;top:0" viewBox="0 0 21 21"><path d="M4.5 3 Q1 6.5 4.5 10.5 Q8 14 4.5 18 M4.5 3 Q8 6.5 4.5 10.5 Q1 14 4.5 18" stroke="#101010" stroke-width="1.3" fill="none"/><path d="M8 10 L20 10" stroke="#e02020" stroke-width="1.3"/><path d="M8 13 L20 13" stroke="#a0b8e0" stroke-width="1"/><path d="M9 12 Q12 1 15 11 Q16.5 15 19 15" stroke="#101010" stroke-width="1.3" fill="none"/></svg></div>
<div style="left:926px;top:154px;width:23px;height:23px;background:#90a2b8;border-top:1px solid #c8d2de;border-left:1px solid #c8d2de;border-right:1px solid #0c1018;border-bottom:1px solid #0c1018;box-sizing:border-box;"><svg width="21" height="21" style="position:absolute;left:0;top:0" viewBox="0 0 21 21"><path d="M2 8.5 L20 8.5" stroke="#e02020" stroke-width="1.3"/><path d="M2 11 L20 11" stroke="#60b090" stroke-width="1"/><path d="M2.5 10 Q5.5 0 8.5 10 Q11.5 0 14.5 10 Q16 12 18 8" stroke="#101010" stroke-width="1.3" fill="none"/><path d="M3 16 Q5.5 11.5 9.5 16 Q13.5 20.5 16 16 Q13.5 11.5 9.5 16 Q5.5 20.5 3 16" stroke="#101010" stroke-width="1.3" fill="none"/><path d="M8 19 L11 16 L12 19Z" fill="#101010"/></svg></div>
<div style="left:957px;top:154px;width:23px;height:23px;background:#90a2b8;border-top:1px solid #c8d2de;border-left:1px solid #c8d2de;border-right:1px solid #0c1018;border-bottom:1px solid #0c1018;box-sizing:border-box;"><svg width="21" height="21" style="position:absolute;left:0;top:0" viewBox="0 0 21 21"><path d="M2 8.5 L19 8.5" stroke="#e02020" stroke-width="1.5"/><path d="M2 10.5 L19 10.5" stroke="#d0d8e0" stroke-width="1"/><path d="M2 9 L6 10 L9 13" stroke="#101010" stroke-width="1.2" fill="none"/><path d="M8.5 11.5 L15.5 15 L12.5 15.5 L14.5 19 L13 19.5 L11 16.5 L9 18.5Z" fill="#f0f0f0" stroke="#101010" stroke-width="1"/></svg></div>
<div class="t" style="left:452px;top:183px;transform:scaleX(0.87);font-size:12px;">Len<u>g</u>th:</div>
<div style="left:498px;top:180px;width:56px;height:18px;background:#fff;border-top:1px solid #0c1018;border-left:1px solid #0c1018;border-right:1px solid #c8d2de;border-bottom:1px solid #c8d2de;box-sizing:border-box;"></div>
<div class="t" style="left:501px;top:183px;transform:scaleX(0.97);font-size:12px;">108895</div>
<div style="left:672px;top:180px;width:56px;height:18px;background:#fff;border-top:1px solid #0c1018;border-left:1px solid #0c1018;border-right:1px solid #c8d2de;border-bottom:1px solid #c8d2de;box-sizing:border-box;"></div>
<div class="t" style="left:675px;top:183px;transform:scaleX(0.97);font-size:12px;">0</div>
<div class="t" style="left:737px;top:183px;transform:scaleX(0.87);font-size:12px;">Rate:</div>
<div style="left:769px;top:179px;width:35px;height:20px;border:1px solid #0c1018;background:#98a8bc;box-shadow:inset 1px 1px 0 #d0dae4, inset -1px -2px 0 #304058;"></div>
<div class="t" style="left:775px;top:183px;transform:scaleX(0.95);font-size:12px;letter-spacing:1px;">C&minus;6</div>
<div style="left:805px;top:181px;width:50px;height:18px;background:#fff;border-top:1px solid #0c1018;border-left:1px solid #0c1018;border-right:1px solid #c8d2de;border-bottom:1px solid #c8d2de;box-sizing:border-box;"></div>
<div class="t" style="left:808px;top:184px;transform:scaleX(0.97);font-size:12px;">33897</div>
<div style="left:449px;top:201px;width:572px;height:288px;border-top:2px solid #0c1018;border-left:2px solid #0c1018;background:#fff;"></div>
<svg style="position:absolute;left:451px;top:203px" width="558" height="271"><path d="M0 134.5 L557 134.5" stroke="#c02828" stroke-width="1"/><polyline points="0.00,134.00 1.00,23.00 1.60,135.00 2.80,149.00 3.60,97.00 4.60,72.00 5.40,188.00 6.60,95.00 7.50,176.00 8.60,100.00 9.50,163.00 10.40,115.00 11.30,163.00 12.20,113.00 13.10,153.00 14.00,118.00 15.00,147.00 16.00,123.00 17.00,152.00 18.50,121.00 20.00,149.00 22.00,126.00 23.50,147.00 25.00,126.00 27.00,142.00 29.00,129.00 29.43,127.76 29.89,126.74 30.38,126.00 30.89,125.59 31.43,125.57 32.00,126.00 32.61,127.13 33.26,128.96 33.94,131.19 34.63,133.48 35.32,135.53 36.00,137.00 36.67,137.97 37.33,138.70 38.00,139.19 38.67,139.41 39.33,139.35 40.00,139.00 40.67,138.16 41.33,136.81 42.00,135.19 42.67,133.52 43.33,132.04 44.00,131.00 44.67,130.35 45.33,129.89 46.00,129.62 46.67,129.56 47.33,129.68 48.00,130.00 48.66,130.63 49.31,131.59 49.96,132.75 50.62,133.96 51.30,135.09 52.00,136.00 52.75,136.80 53.53,137.63 54.34,138.38 55.13,138.93 55.90,139.17 56.60,139.00 57.22,138.23 57.78,136.93 58.31,135.31 58.83,133.63 59.38,132.11 60.00,131.00 60.70,130.22 61.46,129.56 62.24,129.06 63.03,128.78 63.80,128.74 64.50,129.00 65.16,129.72 65.80,130.89 66.41,132.31 66.98,133.78 67.52,135.08 68.00,136.00 70.00,137.00 72.00,142.00 74.00,127.00 76.00,135.00 78.00,146.00 80.00,130.00 80.39,128.01 80.80,126.11 81.22,124.44 81.65,123.11 82.08,122.26 82.50,122.00 82.92,122.64 83.35,124.15 83.78,126.12 84.20,128.19 84.61,129.94 85.00,131.00 87.00,129.00 89.00,135.00 89.42,135.90 89.85,136.85 90.31,137.75 90.81,138.48 91.37,138.94 92.00,139.00 92.70,138.54 93.46,137.63 94.27,136.44 95.14,135.15 96.05,133.94 97.00,133.00 98.03,132.21 99.16,131.41 100.34,130.69 101.50,130.15 102.61,129.89 103.60,130.00 104.45,130.61 105.20,131.67 105.88,133.00 106.55,134.44 107.24,135.83 108.00,137.00 108.86,138.13 109.80,139.41 110.76,140.62 111.69,141.59 112.56,142.12 113.30,142.00 113.90,141.20 114.38,139.85 114.79,138.06 115.17,135.93 115.56,133.54 116.00,131.00 116.49,127.77 117.01,123.67 117.54,119.31 118.06,115.33 118.55,112.35 119.00,111.00 121.00,127.00 123.00,137.00 125.00,135.00 125.45,137.04 125.96,140.28 126.50,144.03 127.04,147.61 127.55,150.33 128.00,151.50 130.00,137.00 130.45,134.31 130.94,131.33 131.47,128.34 132.00,125.61 132.52,123.41 133.00,122.00 133.45,121.58 133.87,121.96 134.28,122.88 134.69,124.04 135.09,125.17 135.50,126.00 135.92,126.44 136.35,126.70 136.78,126.94 137.20,127.30 137.61,127.93 138.00,129.00 140.00,142.00 141.50,197.00 143.00,235.00 144.00,157.00 145.00,127.00 146.60,179.00 149.00,137.00 149.42,131.65 149.86,126.59 150.31,122.06 150.74,118.30 151.14,115.53 151.50,114.00 153.00,127.00 154.40,119.00 156.50,133.00 156.89,135.00 157.30,137.04 157.73,138.94 158.15,140.52 158.58,141.60 159.00,142.00 159.42,141.51 159.84,140.22 160.26,138.44 160.68,136.44 161.09,134.53 161.50,133.00 163.80,127.00 166.00,133.00 168.00,138.00 168.44,137.39 168.93,136.11 169.44,134.50 169.96,132.89 170.49,131.61 171.00,131.00 171.50,131.24 172.00,132.11 172.50,133.31 173.00,134.56 173.50,135.55 174.00,136.00 174.50,135.75 175.00,135.00 175.50,134.00 176.00,133.00 176.50,132.25 177.00,132.00 177.51,132.45 178.04,133.44 178.56,134.69 179.07,135.89 179.56,136.76 180.00,137.00 182.00,130.00 182.52,129.25 183.10,128.56 183.73,128.00 184.39,127.67 185.05,127.64 185.70,128.00 186.34,129.03 187.00,130.70 187.67,132.69 188.33,134.63 188.98,136.18 189.60,137.00 190.19,136.87 190.75,136.04 191.29,134.81 191.84,133.52 192.40,132.47 193.00,132.00 193.63,132.25 194.29,133.00 194.96,134.00 195.64,135.00 196.33,135.75 197.00,136.00 197.67,135.57 198.33,134.63 199.00,133.44 199.67,132.26 200.33,131.36 201.00,131.00 201.67,131.36 202.33,132.26 203.00,133.44 203.67,134.63 204.33,135.57 205.00,136.00 205.68,135.75 206.37,135.00 207.06,134.00 207.74,133.00 208.39,132.25 209.00,132.00 209.54,132.47 210.01,133.52 210.46,134.81 210.92,136.04 211.42,136.87 212.00,137.00 212.68,136.10 213.42,134.37 214.21,132.25 215.02,130.19 215.83,128.62 216.60,128.00 217.34,128.54 218.08,129.93 218.81,131.81 219.54,133.85 220.27,135.70 221.00,137.00 221.73,137.87 222.46,138.59 223.19,139.12 223.92,139.41 224.66,139.38 225.40,139.00 226.15,138.11 226.90,136.74 227.66,135.06 228.43,133.26 229.21,131.51 230.00,130.00 230.82,128.47 231.67,126.74 232.54,125.06 233.39,123.70 234.22,122.93 235.00,123.00 235.72,124.09 236.41,126.02 237.06,128.53 237.70,131.37 238.34,134.28 239.00,137.00 239.68,140.05 240.37,143.72 241.06,147.47 241.74,150.72 242.39,152.92 243.00,153.50 243.56,152.06 244.07,148.97 244.56,144.82 245.04,140.22 245.51,135.75 246.00,132.00 246.48,128.55 246.93,124.84 247.38,121.26 247.85,118.21 248.38,116.09 249.00,115.30 249.72,116.19 250.53,118.51 251.40,121.76 252.29,125.43 253.17,129.01 254.00,132.00 254.77,134.75 255.50,137.73 256.21,140.63 256.95,143.12 257.73,144.89 258.60,145.60 259.57,144.95 260.61,143.13 261.71,140.59 262.83,137.76 263.94,135.08 265.00,133.00 266.03,131.35 267.07,129.73 268.09,128.27 269.09,127.09 270.06,126.29 271.00,126.00 271.89,126.33 272.74,127.20 273.56,128.46 274.37,129.95 275.18,131.52 276.00,133.00 276.83,134.68 277.67,136.75 278.50,138.89 279.33,140.80 280.17,142.17 281.00,142.70 281.82,142.17 282.63,140.80 283.44,138.89 284.26,136.75 285.11,134.68 286.00,133.00 286.97,131.52 288.00,129.95 289.06,128.46 290.11,127.20 291.10,126.33 292.00,126.00 292.78,126.35 293.46,127.27 294.09,128.57 294.70,130.09 295.32,131.62 296.00,133.00 296.73,134.43 297.50,136.12 298.28,137.83 299.06,139.33 299.84,140.39 300.60,140.80 301.34,140.36 302.08,139.21 302.81,137.64 303.54,135.90 304.27,134.26 305.00,133.00 305.73,132.02 306.46,131.09 307.19,130.26 307.92,129.60 308.66,129.16 309.40,129.00 310.15,129.20 310.90,129.74 311.66,130.50 312.43,131.37 313.21,132.24 314.00,133.00 314.82,133.75 315.67,134.59 316.54,135.44 317.39,136.19 318.22,136.74 319.00,137.00 319.72,136.84 320.41,136.30 321.06,135.56 321.70,134.81 322.34,134.23 323.00,134.00 323.69,135.00 324.41,137.26 325.12,139.69 325.81,141.19 326.45,140.66 327.00,137.00 329.00,67.00 330.50,142.00 332.00,88.00 333.00,154.00 334.00,165.00 334.80,108.50 336.80,155.00 337.23,151.84 337.70,143.69 338.19,133.00 338.69,122.26 339.20,113.94 339.70,110.50 340.21,113.49 340.73,121.24 341.26,131.41 341.78,141.65 342.26,149.63 342.70,153.00 344.60,114.00 346.60,146.00 347.05,144.53 347.55,140.04 348.08,133.94 348.60,127.63 349.09,122.52 349.50,120.00 351.00,137.00 352.40,37.00 354.00,147.00 355.30,203.00 356.50,62.00 357.30,97.00 359.00,157.00 359.38,163.83 359.81,170.22 360.26,175.56 360.71,179.22 361.17,180.58 361.60,179.00 364.00,118.00 365.00,180.60 367.00,137.00 369.00,103.00 369.45,106.41 369.96,114.05 370.50,123.78 371.04,133.44 371.55,140.89 372.00,144.00 374.00,105.60 374.43,107.05 374.89,111.70 375.38,118.30 375.89,125.56 376.43,132.22 377.00,137.00 377.61,140.13 378.26,142.67 378.94,144.61 379.63,145.93 380.32,146.59 381.00,146.60 381.66,145.60 382.31,143.54 382.96,140.84 383.62,137.90 384.30,135.15 385.00,133.00 385.76,131.25 386.57,129.55 387.40,128.02 388.21,126.83 388.95,126.11 389.60,126.00 392.00,136.00 392.52,135.53 393.09,134.11 393.68,132.19 394.29,130.22 394.90,128.67 395.50,128.00 396.08,128.34 396.65,129.35 397.22,130.78 397.80,132.37 398.39,133.86 399.00,135.00 399.63,135.87 400.28,136.69 400.94,137.41 401.61,137.98 402.30,138.36 403.00,138.50 403.74,138.32 404.54,137.83 405.34,137.16 406.13,136.39 406.86,135.64 407.50,135.00 408.02,134.48 408.43,134.00 408.79,133.53 409.14,133.06 409.53,132.55 410.00,132.00 410.57,131.28 411.19,130.37 411.86,129.44 412.53,128.63 413.19,128.10 413.80,128.00 414.37,128.49 414.92,129.48 415.45,130.75 415.97,132.07 416.49,133.23 417.00,134.00 417.53,134.16 418.06,133.85 418.59,133.38 419.10,133.04 419.58,133.14 420.00,134.00 421.70,150.00 423.30,114.70 424.00,166.00 425.00,182.00 426.50,92.50 428.00,147.00 429.70,121.00 432.00,132.00 432.60,134.20 433.30,136.85 434.04,139.50 434.78,141.70 435.45,143.02 436.00,143.00 437.60,122.00 440.00,126.00 442.30,137.70 442.78,137.73 443.30,136.91 443.84,135.64 444.40,134.31 444.96,133.30 445.50,133.00 446.03,133.65 446.56,134.99 447.09,136.64 447.63,138.27 448.16,139.51 448.70,140.00 449.25,139.61 449.80,138.59 450.36,137.19 450.92,135.63 451.47,134.16 452.00,133.00 452.52,132.06 453.02,131.11 453.52,130.25 454.01,129.56 454.50,129.11 455.00,129.00 455.50,129.33 455.99,130.05 456.48,131.02 456.98,132.10 457.48,133.14 458.00,134.00 458.55,134.86 459.14,135.86 459.73,136.83 460.31,137.58 460.84,137.93 461.30,137.70 463.00,127.00 463.80,89.70 464.60,39.40 466.00,220.00 467.80,78.00 468.50,175.70 468.83,171.96 469.24,159.34 469.71,141.99 470.18,124.03 470.63,109.59 471.00,102.80 472.40,156.70 474.80,114.00 476.40,150.00 478.80,139.00 481.00,125.00 482.70,155.00 483.25,152.44 483.93,146.48 484.66,138.75 485.41,130.85 486.11,124.40 486.70,121.00 489.00,139.00 490.60,122.60 493.00,137.70 495.40,131.00 495.93,131.27 496.51,132.06 497.13,133.21 497.76,134.53 498.39,135.85 499.00,137.00 499.60,138.20 500.21,139.63 500.82,141.06 501.41,142.26 501.98,142.98 502.50,143.00 502.96,142.09 503.36,140.41 503.73,138.26 504.11,135.94 504.52,133.75 505.00,132.00 505.55,130.43 506.13,128.76 506.76,127.22 507.41,126.06 508.09,125.50 508.80,125.80 509.56,127.44 510.38,130.34 511.22,133.85 512.07,137.33 512.87,140.12 513.60,141.60 514.25,141.46 514.85,140.17 515.41,138.19 515.95,136.02 516.47,134.13 517.00,133.00 517.54,132.61 518.09,132.57 518.62,132.82 519.13,133.27 519.59,133.86 520.00,134.50 521.50,140.80 522.03,138.42 522.67,134.38 523.38,129.58 524.11,124.90 524.83,121.24 525.50,119.50 526.11,119.95 526.70,121.92 527.27,124.92 527.84,128.43 528.42,131.96 529.00,135.00 529.57,138.07 530.13,141.67 530.68,145.29 531.26,148.40 531.89,150.48 532.60,151.00 533.41,149.35 534.32,145.82 535.28,141.26 536.24,136.51 537.16,132.41 538.00,129.80 538.76,128.92 539.46,129.14 540.13,130.01 540.77,131.08 541.39,131.89 542.00,132.00 542.60,131.19 543.17,129.79 543.73,128.14 544.27,126.56 544.79,125.41 545.30,125.00 545.77,125.45 546.21,126.50 546.63,127.97 547.06,129.67 547.50,131.41 548.00,133.00 548.53,134.68 549.07,136.65 549.63,138.66 550.23,140.46 550.89,141.79 551.60,142.40 552.46,142.05 553.47,140.90 554.53,139.29 555.53,137.54 556.39,136.00 557.00,135.00" fill="none" stroke="#000" stroke-width="1"/></svg>
<div style="left:1009px;top:203px;width:12px;height:271px;background:#b8c4d0;"></div>
<div style="left:1009px;top:203px;width:12px;height:12px;background:#90a2b8;border-top:1px solid #c8d2de;border-left:1px solid #c8d2de;border-right:1px solid #0c1018;border-bottom:1px solid #0c1018;box-sizing:border-box;"><svg width="10" height="10" style="position:absolute;left:0;top:0"><path d="M2 6 L8 6 L5 3Z" fill="#101010"/></svg></div>
<div style="left:1009px;top:455px;width:12px;height:7px;background:#90a2b8;border-top:1px solid #c8d2de;border-left:1px solid #c8d2de;border-right:1px solid #0c1018;border-bottom:1px solid #0c1018;box-sizing:border-box;"></div>
<div style="left:1009px;top:461px;width:12px;height:13px;background:#90a2b8;border-top:1px solid #c8d2de;border-left:1px solid #c8d2de;border-right:1px solid #0c1018;border-bottom:1px solid #0c1018;box-sizing:border-box;"><svg width="10" height="11" style="position:absolute;left:0;top:0"><path d="M2 4 L8 4 L5 7Z" fill="#101010"/></svg></div>
<div style="left:451px;top:474px;width:558px;height:14px;background:#b8c4d0;"></div>
<div style="left:1009px;top:474px;width:12px;height:14px;background:#8195ad;"></div>
<div style="left:451px;top:474px;width:13px;height:13px;background:#90a2b8;border-top:1px solid #c8d2de;border-left:1px solid #c8d2de;border-right:1px solid #0c1018;border-bottom:1px solid #0c1018;box-sizing:border-box;"><svg width="11" height="11" style="position:absolute;left:0;top:0"><path d="M7 2 L7 9 L4 5.5Z" fill="#101010"/></svg></div>
<div style="left:996px;top:474px;width:13px;height:13px;background:#90a2b8;border-top:1px solid #c8d2de;border-left:1px solid #c8d2de;border-right:1px solid #0c1018;border-bottom:1px solid #0c1018;box-sizing:border-box;"><svg width="11" height="11" style="position:absolute;left:0;top:0"><path d="M4 2 L4 9 L7 5.5Z" fill="#101010"/></svg></div>
<div style="left:449px;top:488px;width:572px;height:24px;background:#8195ad;border-top:1px solid #b8c6d4;"></div>
<svg style="position:absolute;left:1008px;top:497px" width="13" height="13"><path d="M12 1 L1 12 M12 5 L5 12 M12 9 L9 12" stroke="#e0e8f0" stroke-width="1"/><path d="M12 2 L2 12 M12 6 L6 12 M12 10 L10 12" stroke="#3a4658" stroke-width="1"/></svg>
<div style="left:545px;top:150px;width:133px;height:159px;background:#8195ad;border-top:1px solid #c0ccd8;border-left:1px solid #c0ccd8;border-right:1px solid #0c1018;border-bottom:1px solid #0c1018;box-shadow:inset -1px -1px 0 #56667c;"></div>
<div class="t" style="left:569px;top:155px;transform:scaleX(0.87);font-size:12px;">Change <u>V</u>olume...</div>
<div class="t" style="left:569px;top:172px;transform:scaleX(0.87);font-size:12px;">Change <u>P</u>itch...</div>
<div class="t" style="left:569px;top:189px;transform:scaleX(0.87);font-size:12px;"><u>M</u>ix...</div>
<div class="t" style="left:569px;top:206px;transform:scaleX(0.87);font-size:12px;"><u>F</u>ilter...</div>
<div class="t" style="left:569px;top:223px;transform:scaleX(0.87);font-size:12px;"><u>E</u>cho...</div>
<div class="t" style="left:569px;top:240px;transform:scaleX(0.87);font-size:12px;">Create <u>N</u>oise...</div>
<div class="t" style="left:569px;top:257px;transform:scaleX(0.87);font-size:12px;">Create <u>C</u>hords...</div>
<div class="t" style="left:569px;top:274px;transform:scaleX(0.87);font-size:12px;">Compand...</div>
<div class="t" style="left:569px;top:291px;transform:scaleX(0.87);font-size:12px;"><u>T</u>ime Stretch...</div>
<!--BODY-->
</body></html>
